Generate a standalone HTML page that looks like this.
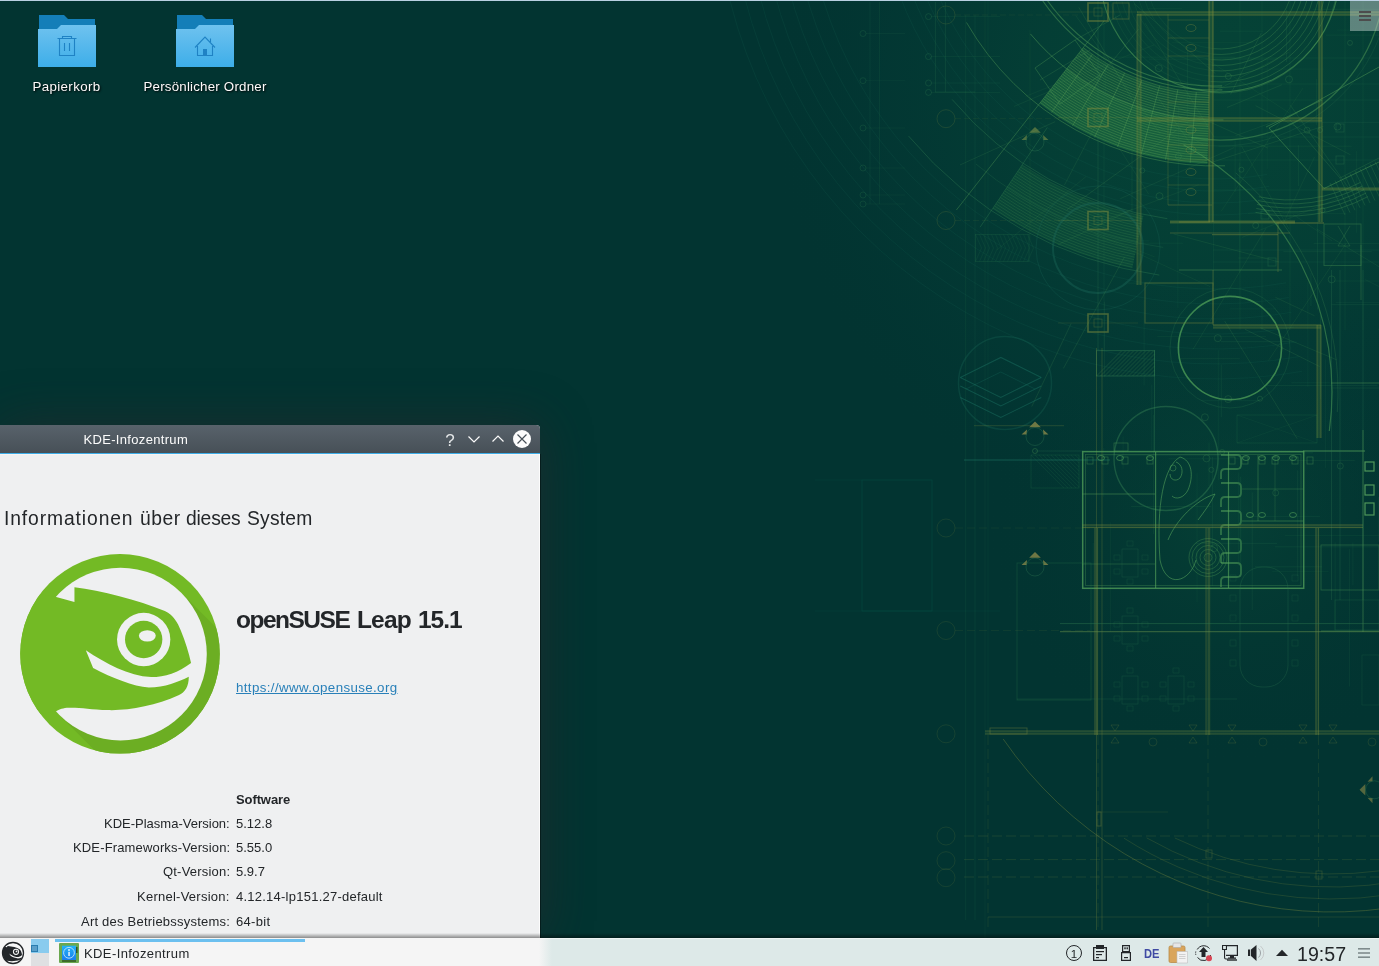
<!DOCTYPE html>
<html lang="de">
<head>
<meta charset="utf-8">
<title>KDE-Infozentrum</title>
<style>
html,body{margin:0;padding:0;}
body{width:1379px;height:966px;overflow:hidden;position:relative;background:#023431;font-family:"Liberation Sans",sans-serif;color:#232629;}
#root{position:absolute;left:0;top:0;width:1379px;height:966px;}
.dlabel,#ttitle,#h1 span,#osname span,#link,.row span,#tasklabel,#clock,svg.ga{will-change:transform;}
#wall{position:absolute;left:0;top:0;width:1379px;height:966px;}
#topline{position:absolute;left:0;top:0;width:1379px;height:1px;background:#b9d0e2;}
#toolbox{position:absolute;left:1350px;top:1px;width:29px;height:30px;background:rgba(255,255,255,0.36);}
#toolbox i{position:absolute;left:9px;width:12px;height:2px;background:#4d4d4d;}
.dicon{position:absolute;top:9px;width:64px;height:64px;}
.dlabel{position:absolute;top:77px;height:20px;line-height:20px;font-size:13.33px;color:#fcfcfc;text-align:center;white-space:nowrap;text-shadow:1px 1px 2px rgba(0,0,0,0.9),0 0 1px rgba(0,0,0,0.6);}
/* window */
#win{position:absolute;left:0;top:425px;width:540px;height:513px;background:#eff0f1;box-shadow:0 0 52px 0 rgba(62,34,44,0.46);border-top-right-radius:4px;}
#tbar{position:absolute;left:0;top:0;width:540px;height:28px;background:linear-gradient(#58626b,#475057);border-top-right-radius:4px;}
#tline{position:absolute;left:0;top:28px;width:540px;height:1px;background:#3daee9;}
#ttitle{position:absolute;left:0;top:1px;width:271.500px;text-align:center;line-height:28px;font-size:13px;letter-spacing:0.33px;color:#fcfcfc;white-space:nowrap;}
#h1{position:absolute;left:4px;top:81px;width:400px;height:26px;font-size:19.3px;line-height:26px;white-space:nowrap;}
#h1 span,#osname span{position:absolute;top:0;}
#osname{position:absolute;left:236.500px;top:179px;width:260px;height:32px;font-size:24.500px;font-weight:bold;line-height:32px;white-space:nowrap;}
#link{position:absolute;left:236px;top:253px;font-size:13.33px;line-height:20px;color:#2980b9;text-decoration:underline;white-space:nowrap;letter-spacing:0.37px;}
.row{position:absolute;left:0;width:540px;height:20px;line-height:20px;font-size:13px;white-space:nowrap;}
.row .l{position:absolute;right:310px;top:0;}
.row .v{position:absolute;left:236px;top:0;}
/* panel */
#panel{position:absolute;left:0;top:938px;width:1379px;height:28px;background:linear-gradient(to right,#f5f5f5 0,#f5f5f5 539px,#dde9e8 552px);}
#pshadow{position:absolute;left:0;top:933px;width:1379px;height:5px;background:linear-gradient(rgba(0,0,0,0),rgba(0,0,0,0.42));}
#task{position:absolute;left:55px;top:1px;width:250px;height:3px;background:#6cc0ef;}
#tasklabel{position:absolute;left:84px;top:5px;line-height:22px;font-size:13px;letter-spacing:0.4px;white-space:nowrap;}
#clock{position:absolute;left:1297px;top:3px;font-size:19.6px;line-height:26px;white-space:nowrap;color:#232629;}
</style>
</head>
<body>
<div id="root">
<svg id="wall" viewBox="0 0 1379 966">
<defs>
<radialGradient id="glow" cx="1225" cy="90" r="460" gradientUnits="userSpaceOnUse">
<stop offset="0" stop-color="#0a5a3e" stop-opacity="0.42"/>
<stop offset="0.4" stop-color="#08503c" stop-opacity="0.36"/>
<stop offset="0.75" stop-color="#04423a" stop-opacity="0.2"/>
<stop offset="1" stop-color="#023431" stop-opacity="0"/>
</radialGradient>
<radialGradient id="glow2" cx="1230" cy="520" r="250" gradientUnits="userSpaceOnUse">
<stop offset="0" stop-color="#0a4e3a" stop-opacity="0.45"/>
<stop offset="1" stop-color="#023431" stop-opacity="0"/>
</radialGradient>
</defs>
<rect width="1379" height="966" fill="#023431"/>
<rect width="1379" height="966" fill="url(#glow)"/>
<rect width="1379" height="966" fill="url(#glow2)"/>
<g fill="none" stroke-linecap="butt">
<path d="M1293.7 -31.4A74 74 0 0 1 1213.6 48.7" stroke="#5aa85a" stroke-width="0.8" opacity="0.34"/>
<path d="M1213.6 48.7A74 74 0 0 1 1146.3 -18.6" stroke="#2f7a50" stroke-width="0.7" opacity="0.22"/>
<path d="M1299.2 -31.9A79.5 79.5 0 0 1 1213.1 54.2" stroke="#5aa85a" stroke-width="0.8" opacity="0.34"/>
<path d="M1213.1 54.2A79.5 79.5 0 0 1 1140.8 -18.1" stroke="#2f7a50" stroke-width="0.7" opacity="0.22"/>
<path d="M1304.7 -32.4A85 85 0 0 1 1212.6 59.7" stroke="#5aa85a" stroke-width="0.8" opacity="0.34"/>
<path d="M1212.6 59.7A85 85 0 0 1 1135.3 -17.6" stroke="#2f7a50" stroke-width="0.7" opacity="0.22"/>
<path d="M1310.2 -32.9A90.5 90.5 0 0 1 1212.1 65.2" stroke="#5aa85a" stroke-width="0.8" opacity="0.34"/>
<path d="M1212.1 65.2A90.5 90.5 0 0 1 1129.8 -17.1" stroke="#2f7a50" stroke-width="0.7" opacity="0.22"/>
<path d="M1315.6 -33.4A96 96 0 0 1 1211.6 70.6" stroke="#5aa85a" stroke-width="0.8" opacity="0.34"/>
<path d="M1211.6 70.6A96 96 0 0 1 1124.4 -16.6" stroke="#2f7a50" stroke-width="0.7" opacity="0.22"/>
<path d="M1321.1 -33.8A101.5 101.5 0 0 1 1211.2 76.1" stroke="#5aa85a" stroke-width="0.8" opacity="0.34"/>
<path d="M1211.2 76.1A101.5 101.5 0 0 1 1118.9 -16.2" stroke="#2f7a50" stroke-width="0.7" opacity="0.22"/>
<path d="M1326.6 -34.3A107 107 0 0 1 1210.7 81.6" stroke="#5aa85a" stroke-width="0.8" opacity="0.34"/>
<path d="M1210.7 81.6A107 107 0 0 1 1113.4 -15.7" stroke="#2f7a50" stroke-width="0.7" opacity="0.22"/>
<path d="M1332.1 -34.8A112.5 112.5 0 0 1 1210.2 87.1" stroke="#5aa85a" stroke-width="0.8" opacity="0.34"/>
<path d="M1210.2 87.1A112.5 112.5 0 0 1 1107.9 -15.2" stroke="#2f7a50" stroke-width="0.7" opacity="0.22"/>
<path d="M1337.6 -35.3A118 118 0 0 1 1209.7 92.6" stroke="#5aa85a" stroke-width="0.8" opacity="0.34"/>
<path d="M1209.7 92.6A118 118 0 0 1 1102.4 -14.7" stroke="#2f7a50" stroke-width="0.7" opacity="0.22"/>
<path d="M1339.5 -35.5A120 120 0 0 1 1100.5 -14.5" stroke="#5aa85a" stroke-width="1.1" opacity="0.5"/>
<path d="M1382.5 -53.7A165 165 0 0 1 1191.3 137.5" stroke="#4f9a55" stroke-width="1.3" opacity="0.5"/>
<path d="M1388.4 -54.7A171 171 0 0 1 1190.3 143.4" stroke="#2f7a50" stroke-width="0.7" opacity="0.3"/>
<path d="M1209.4 92.9L1202.6 92.6L1195.8 92.1L1189 91.4L1182.3 90.5L1175.5 89.3L1168.9 88L1162.2 86.4L1155.7 84.6L1149.1 82.6L1142.7 80.4L1136.3 78L1130 75.4L1123.8 72.6L1117.7 69.6L1111.7 66.4L1105.7 63L1099.9 59.4L1094.3 55.7L1088.7 51.7L1083.2 47.6L1066.6 68.9L1072.7 73.5L1079 78L1085.4 82.2L1092 86.2L1098.6 90L1105.4 93.6L1112.3 97L1119.3 100.2L1126.4 103.1L1133.6 105.8L1140.8 108.3L1148.2 110.5L1155.6 112.6L1163 114.3L1170.6 115.9L1178.1 117.2L1185.7 118.2L1193.4 119L1201 119.6L1208.7 119.9Z" fill="#3c9a4a" opacity="0.2" stroke="none"/>
<path d="M1208.7 119.9L1201 119.6L1193.4 119L1185.7 118.2L1178.1 117.2L1170.6 115.9L1163 114.3L1155.6 112.6L1148.2 110.5L1140.8 108.3L1133.6 105.8L1126.4 103.1L1119.3 100.2L1112.3 97L1105.4 93.6L1098.6 90L1092 86.2L1085.4 82.2L1079 78L1072.7 73.5L1066.6 68.9L1039.5 103.6L1046.8 109.1L1054.2 114.3L1061.8 119.3L1069.5 124.1L1077.4 128.6L1085.4 132.8L1093.5 136.8L1101.8 140.6L1110.2 144L1118.7 147.2L1127.3 150.2L1136 152.8L1144.7 155.2L1153.6 157.3L1162.5 159.1L1171.4 160.6L1180.4 161.9L1189.4 162.8L1198.5 163.5L1207.5 163.9Z" fill="#3c9a4a" opacity="0.32" stroke="none"/>
<path d="M1209.4 92.9A214 214 0 0 1 1083.2 47.6" stroke="#6fb35a" stroke-width="0.8" opacity="0.36"/>
<path d="M1209.3 95.3A216.4 216.4 0 0 1 1081.8 49.5" stroke="#6fb35a" stroke-width="0.8" opacity="0.36"/>
<path d="M1209.3 97.7A218.8 218.8 0 0 1 1080.3 51.4" stroke="#6fb35a" stroke-width="0.8" opacity="0.36"/>
<path d="M1209.2 100.1A221.2 221.2 0 0 1 1078.8 53.3" stroke="#6fb35a" stroke-width="0.8" opacity="0.36"/>
<path d="M1209.1 102.5A223.6 223.6 0 0 1 1077.3 55.2" stroke="#6fb35a" stroke-width="0.8" opacity="0.36"/>
<path d="M1209.1 104.9A226 226 0 0 1 1075.9 57.1" stroke="#6fb35a" stroke-width="0.8" opacity="0.36"/>
<path d="M1209 107.3A228.4 228.4 0 0 1 1074.4 59" stroke="#6fb35a" stroke-width="0.8" opacity="0.36"/>
<path d="M1209 109.7A230.8 230.8 0 0 1 1072.9 60.9" stroke="#6fb35a" stroke-width="0.8" opacity="0.36"/>
<path d="M1208.9 112.1A233.2 233.2 0 0 1 1071.4 62.8" stroke="#6fb35a" stroke-width="0.8" opacity="0.36"/>
<path d="M1208.8 114.5A235.6 235.6 0 0 1 1070 64.7" stroke="#6fb35a" stroke-width="0.8" opacity="0.36"/>
<path d="M1208.8 116.9A238 238 0 0 1 1068.5 66.5" stroke="#6fb35a" stroke-width="0.8" opacity="0.36"/>
<path d="M1208.7 119.3A240.4 240.4 0 0 1 1067 68.4" stroke="#6fb35a" stroke-width="0.8" opacity="0.36"/>
<path d="M1208.6 121.7A242.8 242.8 0 0 1 1065.5 70.3" stroke="#6fb35a" stroke-width="0.8" opacity="0.36"/>
<path d="M1208.6 124.1A245.2 245.2 0 0 1 1064 72.2" stroke="#6fb35a" stroke-width="0.8" opacity="0.36"/>
<path d="M1208.5 126.5A247.6 247.6 0 0 1 1062.6 74.1" stroke="#6fb35a" stroke-width="0.8" opacity="0.36"/>
<path d="M1208.5 128.9A250 250 0 0 1 1061.1 76" stroke="#6fb35a" stroke-width="0.8" opacity="0.36"/>
<path d="M1208.4 131.3A252.4 252.4 0 0 1 1059.6 77.9" stroke="#6fb35a" stroke-width="0.8" opacity="0.36"/>
<path d="M1208.3 133.7A254.8 254.8 0 0 1 1058.1 79.8" stroke="#6fb35a" stroke-width="0.8" opacity="0.36"/>
<path d="M1208.3 136.1A257.2 257.2 0 0 1 1056.7 81.7" stroke="#6fb35a" stroke-width="0.8" opacity="0.36"/>
<path d="M1208.2 138.5A259.6 259.6 0 0 1 1055.2 83.6" stroke="#6fb35a" stroke-width="0.8" opacity="0.36"/>
<path d="M1208.1 140.9A262 262 0 0 1 1053.7 85.5" stroke="#6fb35a" stroke-width="0.8" opacity="0.36"/>
<path d="M1208.1 143.3A264.4 264.4 0 0 1 1052.2 87.4" stroke="#6fb35a" stroke-width="0.8" opacity="0.36"/>
<path d="M1208 145.7A266.8 266.8 0 0 1 1050.7 89.2" stroke="#6fb35a" stroke-width="0.8" opacity="0.36"/>
<path d="M1208 148.1A269.2 269.2 0 0 1 1049.3 91.1" stroke="#6fb35a" stroke-width="0.8" opacity="0.36"/>
<path d="M1207.9 150.5A271.6 271.6 0 0 1 1047.8 93" stroke="#6fb35a" stroke-width="0.8" opacity="0.36"/>
<path d="M1207.8 152.9A274 274 0 0 1 1046.3 94.9" stroke="#6fb35a" stroke-width="0.8" opacity="0.36"/>
<path d="M1207.8 155.3A276.4 276.4 0 0 1 1044.8 96.8" stroke="#6fb35a" stroke-width="0.8" opacity="0.36"/>
<path d="M1207.7 157.7A278.8 278.8 0 0 1 1043.4 98.7" stroke="#6fb35a" stroke-width="0.8" opacity="0.36"/>
<path d="M1207.6 160.1A281.2 281.2 0 0 1 1041.9 100.6" stroke="#6fb35a" stroke-width="0.8" opacity="0.36"/>
<path d="M1207.6 162.5A283.6 283.6 0 0 1 1040.4 102.5" stroke="#6fb35a" stroke-width="0.8" opacity="0.36"/>
<path d="M1222.2 85.9A207 207 0 0 1 1035.7 -17.5" stroke="#4f9a55" stroke-width="1.1" opacity="0.5"/>
<path d="M1222.4 89.9A211 211 0 0 1 1032.3 -15.5" stroke="#4f9a55" stroke-width="1.1" opacity="0.5"/>
<path d="M1223.4 119.9A241 241 0 0 1 1030.4 33.9" stroke="#4f9a55" stroke-width="1" opacity="0.5"/>
<path d="M1225 165.8A287 287 0 0 1 966.5 22.5" stroke="#4f9a55" stroke-width="1" opacity="0.45"/>
<path d="M1196.3 92.2L1190.2 162.9" stroke="#6fb35a" stroke-width="0.8" opacity="0.35"/>
<path d="M1177.8 89.7L1165.5 159.7" stroke="#6fb35a" stroke-width="0.8" opacity="0.35"/>
<path d="M1159.6 85.7L1141.2 154.3" stroke="#6fb35a" stroke-width="0.8" opacity="0.35"/>
<path d="M1141.8 80.1L1117.5 146.8" stroke="#6fb35a" stroke-width="0.8" opacity="0.35"/>
<path d="M1124.6 72.9L1094.6 137.3" stroke="#6fb35a" stroke-width="0.8" opacity="0.35"/>
<path d="M1108 64.3L1072.5 125.8" stroke="#6fb35a" stroke-width="0.8" opacity="0.35"/>
<path d="M1092.3 54.3L1051.5 112.5" stroke="#6fb35a" stroke-width="0.8" opacity="0.35"/>
<path d="M1104.2 20.8L956.4 210" stroke="#4f9a55" stroke-width="1" opacity="0.4"/>
<path d="M1267.1 174.4A300 300 0 0 1 915.2 -110.5" stroke="#1c6a5a" stroke-width="0.8" opacity="0.2"/>
<path d="M1269.2 186.3A312 312 0 0 1 903.2 -110.1" stroke="#1c6a5a" stroke-width="0.8" opacity="0.2"/>
<path d="M1271.3 198.1A324 324 0 0 1 891.2 -109.7" stroke="#1c6a5a" stroke-width="0.8" opacity="0.2"/>
<path d="M1273.3 209.9A336 336 0 0 1 879.2 -109.3" stroke="#1c6a5a" stroke-width="0.8" opacity="0.2"/>
<path d="M1286.2 282.8A410 410 0 0 1 805.2 -106.7" stroke="#1c6a5a" stroke-width="0.8" opacity="0.2"/>
<path d="M1288.8 297.5A425 425 0 0 1 790.3 -106.2" stroke="#1c6a5a" stroke-width="0.8" opacity="0.2"/>
<path d="M1291.4 312.3A440 440 0 0 1 775.3 -105.6" stroke="#1c6a5a" stroke-width="0.8" opacity="0.2"/>
<path d="M1294 327.1A455 455 0 0 1 760.3 -105.1" stroke="#1c6a5a" stroke-width="0.8" opacity="0.2"/>
<path d="M1296.6 341.9A470 470 0 0 1 745.3 -104.6" stroke="#1c6a5a" stroke-width="0.8" opacity="0.2"/>
<path d="M1299.2 356.6A485 485 0 0 1 730.3 -104.1" stroke="#1c6a5a" stroke-width="0.8" opacity="0.2"/>
<path d="M1301.8 371.4A500 500 0 0 1 715.3 -103.6" stroke="#1c6a5a" stroke-width="0.8" opacity="0.2"/>
<path d="M1143.3 216.5L1136.8 215L1130.4 213.5L1124 211.8L1117.6 210L1111.3 208L1105 206L1098.7 203.8L1092.5 201.5L1086.3 199.1L1080.2 196.6L1074.1 193.9L1068.1 191.2L1062.1 188.3L1056.2 185.3L1050.4 182.2L1044.6 179L1038.9 175.6L1033.2 172.2L1027.6 168.7L1022.1 165L992.4 209L998.8 213.2L1005.3 217.3L1011.8 221.2L1018.4 225.1L1025.1 228.8L1031.8 232.4L1038.7 235.8L1045.5 239.1L1052.5 242.3L1059.5 245.4L1066.6 248.3L1073.7 251.1L1080.8 253.7L1088.1 256.2L1095.3 258.6L1102.6 260.8L1110 262.9L1117.4 264.8L1124.8 266.6L1132.3 268.3Z" fill="#2f8a4a" opacity="0.15" stroke="none"/>
<path d="M1143.3 216.5A345 345 0 0 1 1022.1 165" stroke="#4f9a55" stroke-width="0.8" opacity="0.25"/>
<path d="M1142.7 219A347.6 347.6 0 0 1 1020.6 167.2" stroke="#4f9a55" stroke-width="0.8" opacity="0.25"/>
<path d="M1142.2 221.5A350.2 350.2 0 0 1 1019.2 169.3" stroke="#4f9a55" stroke-width="0.8" opacity="0.25"/>
<path d="M1141.6 224.1A352.8 352.8 0 0 1 1017.7 171.5" stroke="#4f9a55" stroke-width="0.8" opacity="0.25"/>
<path d="M1141.1 226.6A355.4 355.4 0 0 1 1016.3 173.6" stroke="#4f9a55" stroke-width="0.8" opacity="0.25"/>
<path d="M1140.6 229.2A358 358 0 0 1 1014.8 175.8" stroke="#4f9a55" stroke-width="0.8" opacity="0.25"/>
<path d="M1140 231.7A360.6 360.6 0 0 1 1013.4 178" stroke="#4f9a55" stroke-width="0.8" opacity="0.25"/>
<path d="M1139.5 234.3A363.2 363.2 0 0 1 1011.9 180.1" stroke="#4f9a55" stroke-width="0.8" opacity="0.25"/>
<path d="M1138.9 236.8A365.8 365.8 0 0 1 1010.4 182.3" stroke="#4f9a55" stroke-width="0.8" opacity="0.25"/>
<path d="M1138.4 239.3A368.4 368.4 0 0 1 1009 184.4" stroke="#4f9a55" stroke-width="0.8" opacity="0.25"/>
<path d="M1137.9 241.9A371 371 0 0 1 1007.5 186.6" stroke="#4f9a55" stroke-width="0.8" opacity="0.25"/>
<path d="M1137.3 244.4A373.6 373.6 0 0 1 1006.1 188.7" stroke="#4f9a55" stroke-width="0.8" opacity="0.25"/>
<path d="M1136.8 247A376.2 376.2 0 0 1 1004.6 190.9" stroke="#4f9a55" stroke-width="0.8" opacity="0.25"/>
<path d="M1136.2 249.5A378.8 378.8 0 0 1 1003.2 193" stroke="#4f9a55" stroke-width="0.8" opacity="0.25"/>
<path d="M1135.7 252.1A381.4 381.4 0 0 1 1001.7 195.2" stroke="#4f9a55" stroke-width="0.8" opacity="0.25"/>
<path d="M1135.2 254.6A384 384 0 0 1 1000.3 197.4" stroke="#4f9a55" stroke-width="0.8" opacity="0.25"/>
<path d="M1134.6 257.2A386.6 386.6 0 0 1 998.8 199.5" stroke="#4f9a55" stroke-width="0.8" opacity="0.25"/>
<path d="M1134.1 259.7A389.2 389.2 0 0 1 997.4 201.7" stroke="#4f9a55" stroke-width="0.8" opacity="0.25"/>
<path d="M1133.5 262.2A391.8 391.8 0 0 1 995.9 203.8" stroke="#4f9a55" stroke-width="0.8" opacity="0.25"/>
<path d="M1133 264.8A394.4 394.4 0 0 1 994.5 206" stroke="#4f9a55" stroke-width="0.8" opacity="0.25"/>
<path d="M1132.5 267.3A397 397 0 0 1 993 208.1" stroke="#4f9a55" stroke-width="0.8" opacity="0.25"/>
<path d="M1167.3 218.7A343 343 0 0 1 952.2 99.5" stroke="#2f7a50" stroke-width="1" opacity="0.4"/>
<path d="M1159.3 275.1A400 400 0 0 1 908.6 136.1" stroke="#2f7a50" stroke-width="1" opacity="0.4"/>
<path d="M1163.2 247.4A372 372 0 0 1 975.9 164" stroke="#2f7a50" stroke-width="0.8" opacity="0.3"/>
<path d="M1047.2 127.7L980.1 227.2" stroke="#2f7a50" stroke-width="1" opacity="0.4"/>
<rect x="975.5" y="234.5" width="53.5" height="27" stroke="#2f7a50" stroke-width="0.7" opacity="0.3" fill="none"/>
<path d="M975.5 234.5L981.5 248L975.5 261.5" stroke="#2f7a50" stroke-width="0.5" opacity="0.3" fill="none"/>
<path d="M979.5 234.5L985.5 248L979.5 261.5" stroke="#2f7a50" stroke-width="0.5" opacity="0.3" fill="none"/>
<path d="M983.5 234.5L989.5 248L983.5 261.5" stroke="#2f7a50" stroke-width="0.5" opacity="0.3" fill="none"/>
<path d="M987.5 234.5L993.5 248L987.5 261.5" stroke="#2f7a50" stroke-width="0.5" opacity="0.3" fill="none"/>
<path d="M991.5 234.5L997.5 248L991.5 261.5" stroke="#2f7a50" stroke-width="0.5" opacity="0.3" fill="none"/>
<path d="M995.5 234.5L1001.5 248L995.5 261.5" stroke="#2f7a50" stroke-width="0.5" opacity="0.3" fill="none"/>
<path d="M999.5 234.5L1005.5 248L999.5 261.5" stroke="#2f7a50" stroke-width="0.5" opacity="0.3" fill="none"/>
<path d="M1003.5 234.5L1009.5 248L1003.5 261.5" stroke="#2f7a50" stroke-width="0.5" opacity="0.3" fill="none"/>
<path d="M1007.5 234.5L1013.5 248L1007.5 261.5" stroke="#2f7a50" stroke-width="0.5" opacity="0.3" fill="none"/>
<path d="M1011.5 234.5L1017.5 248L1011.5 261.5" stroke="#2f7a50" stroke-width="0.5" opacity="0.3" fill="none"/>
<path d="M1015.5 234.5L1021.5 248L1015.5 261.5" stroke="#2f7a50" stroke-width="0.5" opacity="0.3" fill="none"/>
<path d="M1019.5 234.5L1025.5 248L1019.5 261.5" stroke="#2f7a50" stroke-width="0.5" opacity="0.3" fill="none"/>
<path d="M1023.5 234.5L1029.5 248L1023.5 261.5" stroke="#2f7a50" stroke-width="0.5" opacity="0.3" fill="none"/>
<path d="M1027.5 234.5L1033.5 248L1027.5 261.5" stroke="#2f7a50" stroke-width="0.5" opacity="0.3" fill="none"/>
<path d="M1183.5 144.8A280 280 0 0 1 1329.3 431" stroke="#4f9a55" stroke-width="1.2" opacity="0.55"/>
<path d="M1235.8 172.9A286 286 0 0 1 1337.3 412" stroke="#4f9a55" stroke-width="0.7" opacity="0.3"/>
<path d="M1269 128L1379 67" stroke="#4f9a55" stroke-width="1" opacity="0.5" fill="none"/>
<path d="M1269 128L1324 188.5L1379 162" stroke="#4f9a55" stroke-width="1" opacity="0.5" fill="none"/>
<path d="M1290 120L1340 178L1379 158" stroke="#4f9a55" stroke-width="0.7" opacity="0.3" fill="none"/>
<path d="M1035 68L1075 40L1100 75L1060 104L1035 68" stroke="#4f9a55" stroke-width="0.9" opacity="0.4" fill="none"/>
<path d="M1040 80L1090 50" stroke="#4f9a55" stroke-width="0.7" opacity="0.3" fill="none"/>
<path d="M1075 40L1120 15" stroke="#4f9a55" stroke-width="0.7" opacity="0.3" fill="none"/>
<circle cx="1098" cy="248" r="45" stroke="#1c6a5a" stroke-width="2" opacity="0.4" fill="none"/>
<circle cx="1098" cy="248" r="62" stroke="#1c6a5a" stroke-width="1" opacity="0.25" fill="none"/>
<circle cx="1005" cy="383" r="46.5" stroke="#1c6a5a" stroke-width="1.5" opacity="0.3" fill="none"/>
<circle cx="1230" cy="348" r="51.6" stroke="#4fa058" stroke-width="1.6" opacity="0.75" fill="none"/>
<circle cx="1230" cy="348" r="60" stroke="#2f7a50" stroke-width="0.7" opacity="0.35" fill="none"/>
<circle cx="1166" cy="458.5" r="52" stroke="#2f7a50" stroke-width="1.4" opacity="0.5" fill="none"/>
<circle cx="1208" cy="557.5" r="4" stroke="#4f9a55" stroke-width="0.8" opacity="0.45" fill="none"/>
<circle cx="1208" cy="557.5" r="8" stroke="#4f9a55" stroke-width="0.8" opacity="0.45" fill="none"/>
<circle cx="1208" cy="557.5" r="12" stroke="#4f9a55" stroke-width="0.8" opacity="0.45" fill="none"/>
<circle cx="1208" cy="557.5" r="16" stroke="#4f9a55" stroke-width="0.8" opacity="0.45" fill="none"/>
<circle cx="1208" cy="557.5" r="19" stroke="#4f9a55" stroke-width="0.8" opacity="0.45" fill="none"/>
<path d="M1160 560C1156 505 1164 466 1180 457C1192 460 1194 476 1188 490C1184 498 1176 500 1172 496M1176 462c6 2 8 10 4 16c-4 4 -10 2 -10 -4M1160 560C1166 590 1190 582 1196 560M1168 540C1176 520 1196 500 1215 494C1210 504 1204 512 1198 520" stroke="#58a85c" stroke-width="1" opacity="0.55"/>
<circle cx="1173" cy="468" r="3" stroke="#58a85c" stroke-width="0.8" opacity="0.5" fill="none"/>
<path d="M1221 455h16q4 0 4 4v6q0 4 -4 4h-12q-4 0 -4 4v6" stroke="#58a85c" stroke-width="1.800" opacity="0.5" stroke-linejoin="round"/>
<path d="M1221 483h16q4 0 4 4v6q0 4 -4 4h-12q-4 0 -4 4v6" stroke="#58a85c" stroke-width="1.800" opacity="0.5" stroke-linejoin="round"/>
<path d="M1221 511h16q4 0 4 4v6q0 4 -4 4h-12q-4 0 -4 4v6" stroke="#58a85c" stroke-width="1.800" opacity="0.5" stroke-linejoin="round"/>
<path d="M1221 539h16q4 0 4 4v6q0 4 -4 4h-12q-4 0 -4 4v6" stroke="#58a85c" stroke-width="1.800" opacity="0.5" stroke-linejoin="round"/>
<path d="M1221 563h16q4 0 4 4v6q0 4 -4 4h-12q-4 0 -4 4v6" stroke="#58a85c" stroke-width="1.800" opacity="0.5" stroke-linejoin="round"/>
<path d="M1139 14L1139 285" stroke="#6f8f3c" stroke-width="4" opacity="0.22"/>
<path d="M1211 0L1211 222" stroke="#6f8f3c" stroke-width="4" opacity="0.22"/>
<path d="M1320.5 0L1320.5 222" stroke="#6f8f3c" stroke-width="4" opacity="0.22"/>
<path d="M1137 13.5L1379 13.5" stroke="#6f8f3c" stroke-width="4" opacity="0.22"/>
<path d="M1137 119.5L1322 119.5" stroke="#6f8f3c" stroke-width="4" opacity="0.22"/>
<path d="M1170 222L1295 222" stroke="#6f8f3c" stroke-width="4" opacity="0.22"/>
<path d="M1319 325L1319 438" stroke="#6f8f3c" stroke-width="4" opacity="0.22"/>
<path d="M1213 326.5L1321 326.5" stroke="#6f8f3c" stroke-width="4" opacity="0.22"/>
<path d="M1208.5 528L1208.5 735" stroke="#6f8f3c" stroke-width="4" opacity="0.15"/>
<path d="M1096.2 528L1096.2 735" stroke="#6f8f3c" stroke-width="4" opacity="0.15"/>
<path d="M1317.2 528L1317.2 735" stroke="#6f8f3c" stroke-width="4" opacity="0.15"/>
<path d="M1082 526.2L1363 526.2" stroke="#6f8f3c" stroke-width="4" opacity="0.15"/>
<path d="M985 732.5L1379 732.5" stroke="#6f8f3c" stroke-width="4" opacity="0.15"/>
<path d="M1322 189L1379 189" stroke="#6f8f3c" stroke-width="4" opacity="0.22"/>
<path d="M1137 14L1137 285" stroke="#7d8a3c" stroke-width="1" opacity="0.4"/>
<path d="M1141 14L1141 285" stroke="#7d8a3c" stroke-width="1" opacity="0.4"/>
<path d="M1209 0L1209 222" stroke="#7d8a3c" stroke-width="1.2" opacity="0.55"/>
<path d="M1213 0L1213 222" stroke="#7d8a3c" stroke-width="1.2" opacity="0.55"/>
<path d="M1319 0L1319 222" stroke="#7d8a3c" stroke-width="1" opacity="0.45"/>
<path d="M1322 0L1322 222" stroke="#7d8a3c" stroke-width="1" opacity="0.45"/>
<path d="M1137 12L1379 12" stroke="#7d8a3c" stroke-width="1" opacity="0.45"/>
<path d="M1137 15L1379 15" stroke="#7d8a3c" stroke-width="1" opacity="0.45"/>
<path d="M1137 118L1322 118" stroke="#7d8a3c" stroke-width="1" opacity="0.45"/>
<path d="M1137 121L1322 121" stroke="#7d8a3c" stroke-width="1" opacity="0.45"/>
<path d="M1170 222L1295 222" stroke="#7d8a3c" stroke-width="1.5" opacity="0.45"/>
<path d="M1170 233L1290 233" stroke="#7d8a3c" stroke-width="1" opacity="0.4"/>
<path d="M1168 205L1212 205" stroke="#7d8a3c" stroke-width="1" opacity="0.4"/>
<path d="M1098 0L1098 350" stroke="#2f7a50" stroke-width="0.8" opacity="0.35"/>
<path d="M1104 0L1104 350" stroke="#2f7a50" stroke-width="0.6" opacity="0.25"/>
<path d="M1030 30L1030 240" stroke="#2f7a50" stroke-width="0.6" opacity="0.2"/>
<path d="M985 0L985 966" stroke="#2f7a50" stroke-width="0.6" opacity="0.2"/>
<path d="M1168 20L1209 20" stroke="#7d8a3c" stroke-width="0.8" opacity="0.35"/>
<path d="M1168 38L1209 38" stroke="#7d8a3c" stroke-width="0.8" opacity="0.35"/>
<path d="M1168 56L1209 56" stroke="#7d8a3c" stroke-width="0.8" opacity="0.35"/>
<path d="M1168 102L1209 102" stroke="#7d8a3c" stroke-width="0.8" opacity="0.35"/>
<path d="M1168 125L1209 125" stroke="#7d8a3c" stroke-width="0.8" opacity="0.35"/>
<path d="M1168 145L1209 145" stroke="#7d8a3c" stroke-width="0.8" opacity="0.35"/>
<path d="M1168 160L1209 160" stroke="#7d8a3c" stroke-width="0.8" opacity="0.35"/>
<path d="M1168 185L1209 185" stroke="#7d8a3c" stroke-width="0.8" opacity="0.35"/>
<path d="M1168 14L1168 205" stroke="#7d8a3c" stroke-width="0.8" opacity="0.35"/>
<ellipse cx="1191" cy="28" rx="5" ry="3.5" stroke="#7d8a3c" stroke-width="0.8" opacity="0.45"/>
<ellipse cx="1191" cy="48" rx="5" ry="3.5" stroke="#7d8a3c" stroke-width="0.8" opacity="0.45"/>
<ellipse cx="1191" cy="130" rx="5" ry="3.5" stroke="#7d8a3c" stroke-width="0.8" opacity="0.45"/>
<ellipse cx="1191" cy="150" rx="5" ry="3.5" stroke="#7d8a3c" stroke-width="0.8" opacity="0.45"/>
<ellipse cx="1191" cy="172" rx="5" ry="3.5" stroke="#7d8a3c" stroke-width="0.8" opacity="0.45"/>
<ellipse cx="1191" cy="192" rx="5" ry="3.5" stroke="#7d8a3c" stroke-width="0.8" opacity="0.45"/>
<path d="M1213 58L1379 58" stroke="#2f7a50" stroke-width="0.6" opacity="0.25"/>
<path d="M1213 84L1379 84" stroke="#2f7a50" stroke-width="0.6" opacity="0.25"/>
<path d="M1213 100L1379 100" stroke="#2f7a50" stroke-width="0.6" opacity="0.25"/>
<path d="M1213 137L1379 137" stroke="#2f7a50" stroke-width="0.6" opacity="0.25"/>
<path d="M1213 160L1379 160" stroke="#2f7a50" stroke-width="0.6" opacity="0.25"/>
<path d="M1213 190L1379 190" stroke="#2f7a50" stroke-width="0.6" opacity="0.25"/>
<path d="M1213 250L1379 250" stroke="#2f7a50" stroke-width="0.6" opacity="0.25"/>
<path d="M1213 262L1379 262" stroke="#2f7a50" stroke-width="0.6" opacity="0.25"/>
<path d="M1240 0L1240 330" stroke="#2f7a50" stroke-width="0.6" opacity="0.22"/>
<path d="M1262 0L1262 330" stroke="#2f7a50" stroke-width="0.6" opacity="0.22"/>
<path d="M1290 0L1290 330" stroke="#2f7a50" stroke-width="0.6" opacity="0.22"/>
<path d="M1345 0L1345 330" stroke="#2f7a50" stroke-width="0.6" opacity="0.22"/>
<path d="M1363 0L1363 330" stroke="#2f7a50" stroke-width="0.6" opacity="0.22"/>
<rect x="1088" y="3" width="20" height="18" stroke="#7d8a3c" stroke-width="1.6" opacity="0.55" fill="none"/>
<rect x="1094" y="8" width="8" height="8" stroke="#7d8a3c" stroke-width="0.7" opacity="0.4" fill="none"/>
<path d="M1058 12L1138 12" stroke="#7d8a3c" stroke-width="0.6" opacity="0.3"/>
<rect x="1088" y="108.5" width="20" height="18" stroke="#7d8a3c" stroke-width="1.6" opacity="0.55" fill="none"/>
<rect x="1094" y="113.5" width="8" height="8" stroke="#7d8a3c" stroke-width="0.7" opacity="0.4" fill="none"/>
<path d="M1058 117.5L1138 117.5" stroke="#7d8a3c" stroke-width="0.6" opacity="0.3"/>
<rect x="1088" y="211.5" width="20" height="18" stroke="#7d8a3c" stroke-width="1.6" opacity="0.55" fill="none"/>
<rect x="1094" y="216.5" width="8" height="8" stroke="#7d8a3c" stroke-width="0.7" opacity="0.4" fill="none"/>
<path d="M1058 220.5L1138 220.5" stroke="#7d8a3c" stroke-width="0.6" opacity="0.3"/>
<rect x="1088" y="314" width="20" height="18" stroke="#7d8a3c" stroke-width="1.6" opacity="0.55" fill="none"/>
<rect x="1094" y="319" width="8" height="8" stroke="#7d8a3c" stroke-width="0.7" opacity="0.4" fill="none"/>
<path d="M1058 323L1138 323" stroke="#7d8a3c" stroke-width="0.6" opacity="0.3"/>
<rect x="1113" y="3" width="16" height="16" stroke="#7d8a3c" stroke-width="1.2" opacity="0.35" fill="none"/>
<circle cx="863" cy="33.5" r="3" stroke="#2f7a50" stroke-width="0.7" opacity="0.35" fill="none"/>
<path d="M866 33.5L905 33.5" stroke="#2f7a50" stroke-width="0.6" opacity="0.2"/>
<circle cx="863" cy="80.7" r="3" stroke="#2f7a50" stroke-width="0.7" opacity="0.35" fill="none"/>
<path d="M866 80.7L905 80.7" stroke="#2f7a50" stroke-width="0.6" opacity="0.2"/>
<circle cx="863" cy="128" r="3" stroke="#2f7a50" stroke-width="0.7" opacity="0.35" fill="none"/>
<path d="M866 128L905 128" stroke="#2f7a50" stroke-width="0.6" opacity="0.2"/>
<circle cx="863" cy="168" r="3" stroke="#2f7a50" stroke-width="0.7" opacity="0.35" fill="none"/>
<path d="M866 168L905 168" stroke="#2f7a50" stroke-width="0.6" opacity="0.2"/>
<circle cx="863" cy="195" r="3" stroke="#2f7a50" stroke-width="0.7" opacity="0.35" fill="none"/>
<path d="M866 195L905 195" stroke="#2f7a50" stroke-width="0.6" opacity="0.2"/>
<circle cx="863" cy="204" r="3" stroke="#2f7a50" stroke-width="0.7" opacity="0.35" fill="none"/>
<path d="M866 204L905 204" stroke="#2f7a50" stroke-width="0.6" opacity="0.2"/>
<circle cx="928.5" cy="16.6" r="3" stroke="#2f7a50" stroke-width="0.7" opacity="0.4" fill="none"/>
<path d="M931 16.6L1000 16.6" stroke="#2f7a50" stroke-width="0.6" opacity="0.25"/>
<circle cx="928.5" cy="56.6" r="3" stroke="#2f7a50" stroke-width="0.7" opacity="0.4" fill="none"/>
<path d="M931 56.6L1000 56.6" stroke="#2f7a50" stroke-width="0.6" opacity="0.25"/>
<circle cx="928.5" cy="83" r="3" stroke="#2f7a50" stroke-width="0.7" opacity="0.4" fill="none"/>
<path d="M931 83L1000 83" stroke="#2f7a50" stroke-width="0.6" opacity="0.25"/>
<circle cx="928.5" cy="92.4" r="3" stroke="#2f7a50" stroke-width="0.7" opacity="0.4" fill="none"/>
<path d="M931 92.4L1000 92.4" stroke="#2f7a50" stroke-width="0.6" opacity="0.25"/>
<circle cx="946" cy="15" r="9" stroke="#7d8a3c" stroke-width="0.8" opacity="0.26" fill="none"/>
<path d="M955 15L1080 15" stroke="#7d8a3c" stroke-width="0.6" opacity="0.18" stroke-dasharray="6 3"/>
<circle cx="946" cy="118.7" r="9" stroke="#7d8a3c" stroke-width="0.8" opacity="0.26" fill="none"/>
<path d="M955 118.7L1080 118.7" stroke="#7d8a3c" stroke-width="0.6" opacity="0.18" stroke-dasharray="6 3"/>
<circle cx="946" cy="220.5" r="9" stroke="#7d8a3c" stroke-width="0.8" opacity="0.26" fill="none"/>
<path d="M955 220.5L1080 220.5" stroke="#7d8a3c" stroke-width="0.6" opacity="0.18" stroke-dasharray="6 3"/>
<path d="M870 2L870 204" stroke="#2f7a50" stroke-width="0.7" opacity="0.22"/>
<path d="M879.6 2L879.6 204" stroke="#2f7a50" stroke-width="0.7" opacity="0.22"/>
<path d="M935.4 2L935.4 92" stroke="#2f7a50" stroke-width="0.8" opacity="0.3"/>
<path d="M945.4 2L945.4 92" stroke="#2f7a50" stroke-width="0.8" opacity="0.3"/>
<path d="M935 92L975 92" stroke="#2f7a50" stroke-width="0.8" opacity="0.3"/>
<path d="M965.7 15L965.7 920" stroke="#2f7a50" stroke-width="0.7" opacity="0.22"/>
<path d="M975 15L975 920" stroke="#2f7a50" stroke-width="0.7" opacity="0.22"/>
<path d="M1360.4 182.4A150 150 0 0 1 1258.8 196.7" stroke="#4f9a55" stroke-width="0.8" opacity="0.4"/>
<path d="M1362.3 186A154 154 0 0 1 1258 200.6" stroke="#4f9a55" stroke-width="0.8" opacity="0.4"/>
<path d="M1364.2 189.5A158 158 0 0 1 1257.1 204.5" stroke="#4f9a55" stroke-width="0.8" opacity="0.4"/>
<path d="M1366.1 193A162 162 0 0 1 1256.3 208.5" stroke="#4f9a55" stroke-width="0.8" opacity="0.4"/>
<path d="M1367.9 196.6A166 166 0 0 1 1255.5 212.4" stroke="#4f9a55" stroke-width="0.8" opacity="0.4"/>
<path d="M1266 127L1322 100" stroke="#4f9a55" stroke-width="1" opacity="0.45"/>
<path d="M1322 189L1379 189" stroke="#7d8a3c" stroke-width="1.2" opacity="0.45"/>
<path d="M1179 222L1210 222" stroke="#7d8a3c" stroke-width="1.3" opacity="0.45"/>
<path d="M1276 223L1324 223" stroke="#7d8a3c" stroke-width="1.3" opacity="0.45"/>
<path d="M1212 234.6L1278 234.6" stroke="#7d8a3c" stroke-width="1.2" opacity="0.45"/>
<path d="M1278 222L1278 272" stroke="#7d8a3c" stroke-width="1" opacity="0.4"/>
<path d="M1179 270L1282 270" stroke="#4f9a55" stroke-width="1" opacity="0.45"/>
<rect x="1324" y="224" width="37" height="41.6" stroke="#4f9a55" stroke-width="0.9" opacity="0.4" fill="none"/>
<path d="M1361 245L1361 300" stroke="#4f9a55" stroke-width="0.9" opacity="0.4"/>
<path d="M1338 226L1350 246L1338 246L1350 226" stroke="#4f9a55" stroke-width="0.7" opacity="0.35" fill="none"/>
<rect x="1336" y="124" width="8" height="8" stroke="#2f7a50" stroke-width="0.8" opacity="0.4" fill="none"/>
<rect x="1336" y="156" width="8" height="8" stroke="#2f7a50" stroke-width="0.8" opacity="0.4" fill="none"/>
<rect x="1261" y="211" width="8" height="8" stroke="#2f7a50" stroke-width="0.8" opacity="0.4" fill="none"/>
<rect x="1268" y="258" width="8" height="8" stroke="#2f7a50" stroke-width="0.8" opacity="0.4" fill="none"/>
<path d="M1330 183L1345 215" stroke="#4f9a55" stroke-width="0.7" opacity="0.3"/>
<path d="M1335 180.6L1350 212.6" stroke="#4f9a55" stroke-width="0.7" opacity="0.3"/>
<path d="M1340 178.2L1355 210.2" stroke="#4f9a55" stroke-width="0.7" opacity="0.3"/>
<path d="M1345 175.8L1360 207.8" stroke="#4f9a55" stroke-width="0.7" opacity="0.3"/>
<path d="M1350 173.4L1365 205.4" stroke="#4f9a55" stroke-width="0.7" opacity="0.3"/>
<path d="M1355 171L1370 203" stroke="#4f9a55" stroke-width="0.7" opacity="0.3"/>
<path d="M1360 168.6L1375 200.6" stroke="#4f9a55" stroke-width="0.7" opacity="0.3"/>
<path d="M1365 166.2L1380 198.2" stroke="#4f9a55" stroke-width="0.7" opacity="0.3"/>
<path d="M1370 163.8L1385 195.8" stroke="#4f9a55" stroke-width="0.7" opacity="0.3"/>
<path d="M1375 161.4L1390 193.4" stroke="#4f9a55" stroke-width="0.7" opacity="0.3"/>
<path d="M1198.8 184.7L1073.3 231.8" stroke="#4f9a55" stroke-width="0.6" opacity="0.1784853046961058"/>
<path d="M1314.5 157L1283.3 223.4" stroke="#4f9a55" stroke-width="0.6" opacity="0.16360058062377592"/>
<path d="M1316.4 228.8L1387.9 272.1" stroke="#4f9a55" stroke-width="0.6" opacity="0.2179492298371224"/>
<path d="M1293.1 214.5L1332 240.8" stroke="#4f9a55" stroke-width="0.6" opacity="0.1553479170689824"/>
<path d="M1339.4 197.9L1242.1 237.4" stroke="#4f9a55" stroke-width="0.6" opacity="0.17929820662639004"/>
<path d="M1126.9 97.1L1203.5 144.9" stroke="#4f9a55" stroke-width="0.6" opacity="0.19172443494958286"/>
<path d="M1378.2 328.6L1412.7 394.8" stroke="#4f9a55" stroke-width="0.6" opacity="0.18444988524118583"/>
<path d="M1145.1 23.2L1214 137" stroke="#4f9a55" stroke-width="0.6" opacity="0.20797702975589016"/>
<path d="M1365.2 279.6L1492.2 343.1" stroke="#4f9a55" stroke-width="0.6" opacity="0.1578483888544"/>
<path d="M1173.5 233.9L1279.1 262" stroke="#4f9a55" stroke-width="0.6" opacity="0.2667766288014976"/>
<path d="M1138.8 28.8L1085 94.7" stroke="#4f9a55" stroke-width="0.6" opacity="0.2884271555967536"/>
<path d="M1094.3 233.3L1210.3 286.7" stroke="#4f9a55" stroke-width="0.6" opacity="0.17665171922975492"/>
<path d="M1234 147.7L1120.3 198.7" stroke="#4f9a55" stroke-width="0.6" opacity="0.21288457435784686"/>
<path d="M1176.3 130.3L1067 209.7" stroke="#4f9a55" stroke-width="0.6" opacity="0.29622855909549983"/>
<path d="M1245 329.3L1319.6 366.5" stroke="#4f9a55" stroke-width="0.6" opacity="0.2781565352551846"/>
<path d="M1261.2 33.1L1230.6 94.3" stroke="#4f9a55" stroke-width="0.6" opacity="0.2659034534659235"/>
<path d="M1158.2 97.8L1194.4 149.3" stroke="#4f9a55" stroke-width="0.6" opacity="0.24548811082878663"/>
<path d="M1055.1 121.7L959.9 165" stroke="#4f9a55" stroke-width="0.6" opacity="0.27485388432581487"/>
<path d="M1094.7 127.4L1064.4 185.1" stroke="#4f9a55" stroke-width="0.6" opacity="0.2415667234914361"/>
<path d="M1288.7 52.3L1215.5 90.8" stroke="#4f9a55" stroke-width="0.6" opacity="0.2223774316946427"/>
<path d="M1075.8 15.6L1160.6 134.4" stroke="#4f9a55" stroke-width="0.6" opacity="0.1857610789013974"/>
<path d="M1281.8 84.8L1227 107.5" stroke="#4f9a55" stroke-width="0.6" opacity="0.25805299912822793"/>
<path d="M1072.6 75.4L1148.6 194" stroke="#4f9a55" stroke-width="0.6" opacity="0.18059683190545264"/>
<path d="M1055.5 88.8L1013.9 106.5" stroke="#4f9a55" stroke-width="0.6" opacity="0.1922942825057939"/>
<path d="M1224.7 321.1L1297.1 438.6" stroke="#4f9a55" stroke-width="0.6" opacity="0.29707401320073556"/>
<path d="M1266.1 228.1L1193 349.4" stroke="#4f9a55" stroke-width="0.6" opacity="0.2212189345548441"/>
<path d="M1167.6 102.9L1267.9 148.1" stroke="#4f9a55" stroke-width="0.6" opacity="0.22233535841174856"/>
<path d="M1290.3 105.2L1347.9 187.1" stroke="#4f9a55" stroke-width="0.6" opacity="0.2605508242299388"/>
<path d="M1346.2 243.2L1268.5 360.5" stroke="#4f9a55" stroke-width="0.6" opacity="0.20277511449708804"/>
<path d="M1275.4 297.3L1314.6 315.8" stroke="#4f9a55" stroke-width="0.6" opacity="0.22498885047376993"/>
<path d="M1054.8 218.5L1154.7 256.9" stroke="#4f9a55" stroke-width="0.6" opacity="0.16203030432460652"/>
<path d="M1260.4 327.8L1336.7 359.8" stroke="#4f9a55" stroke-width="0.6" opacity="0.26025572273227177"/>
<path d="M1241.1 145.4L1289.1 229.2" stroke="#4f9a55" stroke-width="0.6" opacity="0.19653524860883348"/>
<path d="M1078.9 7.4L1132.7 100.5" stroke="#4f9a55" stroke-width="0.6" opacity="0.28806964101601085"/>
<path d="M1134.2 3.7L1215.5 73.7" stroke="#4f9a55" stroke-width="0.6" opacity="0.2277591930735191"/>
<path d="M1298 113L1235.4 135.8" stroke="#4f9a55" stroke-width="0.6" opacity="0.21071357540700478"/>
<path d="M1132.4 209.3L1058.1 244.6" stroke="#4f9a55" stroke-width="0.6" opacity="0.23746607816309118"/>
<path d="M1154.1 44.9L1025.5 96.4" stroke="#4f9a55" stroke-width="0.6" opacity="0.15608586599441368"/>
<path d="M1071.1 323.5L1031.8 406.5" stroke="#4f9a55" stroke-width="0.6" opacity="0.288859780372024"/>
<path d="M1323.4 126.2L1210.3 162.8" stroke="#4f9a55" stroke-width="0.6" opacity="0.2762853070892801"/>
<path d="M1255.6 105.7L1350.5 154.8" stroke="#4f9a55" stroke-width="0.6" opacity="0.251738207089116"/>
<path d="M1142.5 116.9L1214.4 161.3" stroke="#4f9a55" stroke-width="0.6" opacity="0.17848777326724657"/>
<path d="M1303.1 87.9L1221.1 211.4" stroke="#4f9a55" stroke-width="0.6" opacity="0.1672957257700869"/>
<path d="M1085.9 176.7L996.9 250" stroke="#4f9a55" stroke-width="0.6" opacity="0.17990121337455264"/>
<path d="M1206.3 59L1289.2 112.9" stroke="#4f9a55" stroke-width="0.6" opacity="0.15542625097084656"/>
<path d="M1124.5 256.9L1063.4 368.4" stroke="#4f9a55" stroke-width="0.6" opacity="0.2859355478256078"/>
<path d="M1110.6 522.3L1110.6 631.7" stroke="#2f7a50" stroke-width="0.6" opacity="0.1981873889496208"/>
<path d="M1218.3 350.3L1218.3 480.4" stroke="#2f7a50" stroke-width="0.6" opacity="0.23275238765032463"/>
<path d="M1252.2 492.4L1252.2 610.1" stroke="#2f7a50" stroke-width="0.6" opacity="0.31219612097765254"/>
<path d="M1221.3 364.7L1221.3 417.3" stroke="#2f7a50" stroke-width="0.6" opacity="0.2810709911678893"/>
<path d="M1325.6 359.3L1325.6 468.2" stroke="#2f7a50" stroke-width="0.6" opacity="0.2098615210795467"/>
<path d="M1349.6 549.1L1349.6 686.6" stroke="#2f7a50" stroke-width="0.6" opacity="0.2551739240940273"/>
<path d="M1317.5 179.4L1317.5 309.5" stroke="#2f7a50" stroke-width="0.6" opacity="0.2998096847697402"/>
<path d="M1187.5 46.4L1187.5 124.9" stroke="#2f7a50" stroke-width="0.6" opacity="0.25704226984827505"/>
<path d="M1310.9 273L1310.9 306.1" stroke="#2f7a50" stroke-width="0.6" opacity="0.2932796223570172"/>
<path d="M1103.8 447.9L1103.8 496.9" stroke="#2f7a50" stroke-width="0.6" opacity="0.22690060582847657"/>
<path d="M1316.6 78.7L1316.6 125" stroke="#2f7a50" stroke-width="0.6" opacity="0.25231348846911944"/>
<path d="M1297.7 470.4L1297.7 576.2" stroke="#2f7a50" stroke-width="0.6" opacity="0.3124046355723696"/>
<path d="M1229.8 531.5L1229.8 571" stroke="#2f7a50" stroke-width="0.6" opacity="0.21099798337756911"/>
<path d="M1239.8 162.5L1239.8 272.7" stroke="#2f7a50" stroke-width="0.6" opacity="0.2694419598803598"/>
<path d="M1238.7 472.4L1238.7 564" stroke="#2f7a50" stroke-width="0.6" opacity="0.22363765875981606"/>
<path d="M1197.1 473.3L1197.1 602.4" stroke="#2f7a50" stroke-width="0.6" opacity="0.20915354015397908"/>
<path d="M1335.1 542.3L1335.1 630" stroke="#2f7a50" stroke-width="0.6" opacity="0.2602184712117215"/>
<path d="M1144.1 300.1L1144.1 385.5" stroke="#2f7a50" stroke-width="0.6" opacity="0.26473188484299354"/>
<path d="M1093.2 542.9L1093.2 629.6" stroke="#2f7a50" stroke-width="0.6" opacity="0.23608175081133503"/>
<path d="M1320.5 315.2L1320.5 399.2" stroke="#2f7a50" stroke-width="0.6" opacity="0.27673814656844714"/>
<path d="M1104.4 301.7L1104.4 377.2" stroke="#2f7a50" stroke-width="0.6" opacity="0.3139611109499274"/>
<path d="M1356.5 150.8L1356.5 232.8" stroke="#2f7a50" stroke-width="0.6" opacity="0.1977754624750861"/>
<path d="M1212.5 456.8L1212.5 585.9" stroke="#2f7a50" stroke-width="0.6" opacity="0.24671458030862697"/>
<path d="M1178.3 107.2L1178.3 205.2" stroke="#2f7a50" stroke-width="0.6" opacity="0.30953789499723305"/>
<path d="M1123.1 436.4L1123.1 468.9" stroke="#2f7a50" stroke-width="0.6" opacity="0.20717492432723988"/>
<path d="M1151.8 384.7L1151.8 450.2" stroke="#2f7a50" stroke-width="0.6" opacity="0.22974859278071919"/>
<path d="M1267.2 58.7L1267.2 169.1" stroke="#2f7a50" stroke-width="0.6" opacity="0.19718966856053927"/>
<path d="M1235.1 140.3L1235.1 192.1" stroke="#2f7a50" stroke-width="0.6" opacity="0.2542492637263418"/>
<path d="M1213.4 210.4L1213.4 285.9" stroke="#2f7a50" stroke-width="0.6" opacity="0.2541086779997588"/>
<path d="M1132 114.4L1132 213.8" stroke="#2f7a50" stroke-width="0.6" opacity="0.2693854030264029"/>
<path d="M1240.7 476.7L1240.7 574" stroke="#2f7a50" stroke-width="0.6" opacity="0.29994698985744417"/>
<path d="M1153.4 414.8L1153.4 534" stroke="#2f7a50" stroke-width="0.6" opacity="0.3063748541873611"/>
<path d="M1177.9 176.4L1177.9 307.9" stroke="#2f7a50" stroke-width="0.6" opacity="0.21054020351889757"/>
<path d="M1378.5 497L1378.5 541.8" stroke="#2f7a50" stroke-width="0.6" opacity="0.21350864632841807"/>
<path d="M1298.6 145.3L1298.6 186" stroke="#2f7a50" stroke-width="0.6" opacity="0.29650359475438776"/>
<path d="M1209 442.4L1209 486.2" stroke="#2f7a50" stroke-width="0.6" opacity="0.23638903221427632"/>
<path d="M1286.5 9.9L1286.5 62" stroke="#2f7a50" stroke-width="0.6" opacity="0.27553363926755087"/>
<path d="M1352.9 542.3L1352.9 585" stroke="#2f7a50" stroke-width="0.6" opacity="0.25079532927909953"/>
<path d="M1307.9 281.6L1307.9 387" stroke="#2f7a50" stroke-width="0.6" opacity="0.20646102035342245"/>
<path d="M1105.7 59.5L1105.7 93.6" stroke="#2f7a50" stroke-width="0.6" opacity="0.25723401029311777"/>
<path d="M1230 308.9L1276.2 308.9" stroke="#2f7a50" stroke-width="0.6" opacity="0.20583508116075827"/>
<path d="M1299.3 122.3L1438.2 122.3" stroke="#2f7a50" stroke-width="0.6" opacity="0.30976492415525986"/>
<path d="M1100.8 57.1L1235.5 57.1" stroke="#2f7a50" stroke-width="0.6" opacity="0.2446899037872612"/>
<path d="M1168.3 458.8L1249.7 458.8" stroke="#2f7a50" stroke-width="0.6" opacity="0.2521401976767169"/>
<path d="M1238.2 258L1269.7 258" stroke="#2f7a50" stroke-width="0.6" opacity="0.27814421270581235"/>
<path d="M1131.2 506.6L1211.2 506.6" stroke="#2f7a50" stroke-width="0.6" opacity="0.28350679302086784"/>
<path d="M1134.8 243.2L1182.9 243.2" stroke="#2f7a50" stroke-width="0.6" opacity="0.25175851174390973"/>
<path d="M1312.8 9.3L1430.9 9.3" stroke="#2f7a50" stroke-width="0.6" opacity="0.27865401642462473"/>
<path d="M1245.5 516.4L1320 516.4" stroke="#2f7a50" stroke-width="0.6" opacity="0.26394472022900506"/>
<path d="M1335.6 302.6L1454.1 302.6" stroke="#2f7a50" stroke-width="0.6" opacity="0.21615699439594302"/>
<path d="M1274.8 546.8L1390.4 546.8" stroke="#2f7a50" stroke-width="0.6" opacity="0.2940498409474745"/>
<path d="M1313.6 243.4L1440.4 243.4" stroke="#2f7a50" stroke-width="0.6" opacity="0.2772718288882191"/>
<path d="M1280.1 460.4L1354.8 460.4" stroke="#2f7a50" stroke-width="0.6" opacity="0.28116880957688717"/>
<path d="M1172.1 42.3L1253.7 42.3" stroke="#2f7a50" stroke-width="0.6" opacity="0.18148324477916017"/>
<path d="M1247.9 213.4L1346.5 213.4" stroke="#2f7a50" stroke-width="0.6" opacity="0.2124950072036428"/>
<path d="M1254.9 566.8L1322 566.8" stroke="#2f7a50" stroke-width="0.6" opacity="0.2723665722970544"/>
<path d="M1220.9 341.7L1293.8 341.7" stroke="#2f7a50" stroke-width="0.6" opacity="0.3199841821913667"/>
<path d="M1263.8 385.4L1377.6 385.4" stroke="#2f7a50" stroke-width="0.6" opacity="0.3172121395207036"/>
<path d="M1241.9 13.7L1353.2 13.7" stroke="#2f7a50" stroke-width="0.6" opacity="0.21592868910812218"/>
<path d="M1097.9 240.9L1149.4 240.9" stroke="#2f7a50" stroke-width="0.6" opacity="0.23259473891190613"/>
<path d="M1149 59.1L1278.6 59.1" stroke="#2f7a50" stroke-width="0.6" opacity="0.25700807672491854"/>
<path d="M1331.6 304.7L1424.1 304.7" stroke="#2f7a50" stroke-width="0.6" opacity="0.3193147217776593"/>
<path d="M1291.4 382.8L1329.8 382.8" stroke="#2f7a50" stroke-width="0.6" opacity="0.2636551217256493"/>
<path d="M1096.5 455.5L1228.8 455.5" stroke="#2f7a50" stroke-width="0.6" opacity="0.20239042024334034"/>
<path d="M1128.1 283.1L1212.6 283.1" stroke="#2f7a50" stroke-width="0.6" opacity="0.2655640240275764"/>
<path d="M1326 35.1L1402.3 35.1" stroke="#2f7a50" stroke-width="0.6" opacity="0.25374615382998794"/>
<path d="M1178.2 358.7L1239.7 358.7" stroke="#2f7a50" stroke-width="0.6" opacity="0.27171561641816655"/>
<path d="M1157.3 336.4L1266.1 336.4" stroke="#2f7a50" stroke-width="0.6" opacity="0.22144566970885235"/>
<path d="M1147.5 8.4L1182.2 8.4" stroke="#2f7a50" stroke-width="0.6" opacity="0.20192223949158794"/>
<path d="M1184.4 452.8L1313.2 452.8" stroke="#2f7a50" stroke-width="0.6" opacity="0.2847708364999887"/>
<path d="M1337.1 30.1L1471 30.1" stroke="#2f7a50" stroke-width="0.6" opacity="0.190290599552265"/>
<path d="M1194.5 543.3L1277.1 543.3" stroke="#2f7a50" stroke-width="0.6" opacity="0.31624353025682184"/>
<path d="M1218.5 146.2L1351.6 146.2" stroke="#2f7a50" stroke-width="0.6" opacity="0.28118328725789643"/>
<path d="M1334.6 281L1454.4 281" stroke="#2f7a50" stroke-width="0.6" opacity="0.26450726076138653"/>
<path d="M1244.2 69.1L1324.3 69.1" stroke="#2f7a50" stroke-width="0.6" opacity="0.2085119716864681"/>
<path d="M1219.7 31.2L1263.3 31.2" stroke="#2f7a50" stroke-width="0.6" opacity="0.24200097590363737"/>
<path d="M1201.2 400.7L1260 400.7" stroke="#2f7a50" stroke-width="0.6" opacity="0.26151313137621346"/>
<path d="M1283.4 251.7L1371.8 251.7" stroke="#2f7a50" stroke-width="0.6" opacity="0.3196688426969668"/>
<path d="M1272.2 571.6L1328.5 571.6" stroke="#2f7a50" stroke-width="0.6" opacity="0.19594159744987474"/>
<path d="M1285 535.6L1383.7 535.6" stroke="#2f7a50" stroke-width="0.6" opacity="0.23028574525166845"/>
<circle cx="1204.9" cy="417.3" r="3.5" stroke="#4f9a55" stroke-width="0.7" opacity="0.3" fill="none"/>
<circle cx="1307.1" cy="130.2" r="3" stroke="#4f9a55" stroke-width="0.7" opacity="0.3" fill="none"/>
<circle cx="1320.1" cy="130.1" r="2.5" stroke="#4f9a55" stroke-width="0.7" opacity="0.3" fill="none"/>
<circle cx="1260" cy="398.7" r="2.5" stroke="#4f9a55" stroke-width="0.7" opacity="0.3" fill="none"/>
<circle cx="1350" cy="42.9" r="2.5" stroke="#4f9a55" stroke-width="0.7" opacity="0.3" fill="none"/>
<circle cx="1142.3" cy="170.5" r="2.5" stroke="#4f9a55" stroke-width="0.7" opacity="0.3" fill="none"/>
<circle cx="1289" cy="79.4" r="3.5" stroke="#4f9a55" stroke-width="0.7" opacity="0.3" fill="none"/>
<circle cx="1206.5" cy="458.4" r="3.5" stroke="#4f9a55" stroke-width="0.7" opacity="0.3" fill="none"/>
<circle cx="1178.4" cy="156.2" r="3" stroke="#4f9a55" stroke-width="0.7" opacity="0.3" fill="none"/>
<circle cx="1255.7" cy="225.4" r="3" stroke="#4f9a55" stroke-width="0.7" opacity="0.3" fill="none"/>
<circle cx="1222.1" cy="452" r="2.5" stroke="#4f9a55" stroke-width="0.7" opacity="0.3" fill="none"/>
<circle cx="1331.7" cy="279.4" r="3.5" stroke="#4f9a55" stroke-width="0.7" opacity="0.3" fill="none"/>
<circle cx="1340.3" cy="466" r="3" stroke="#4f9a55" stroke-width="0.7" opacity="0.3" fill="none"/>
<circle cx="1241.4" cy="169.7" r="2.5" stroke="#4f9a55" stroke-width="0.7" opacity="0.3" fill="none"/>
<circle cx="1228.2" cy="399.1" r="3.5" stroke="#4f9a55" stroke-width="0.7" opacity="0.3" fill="none"/>
<circle cx="1217.8" cy="338.2" r="3.5" stroke="#4f9a55" stroke-width="0.7" opacity="0.3" fill="none"/>
<circle cx="1337.5" cy="126.6" r="3.5" stroke="#4f9a55" stroke-width="0.7" opacity="0.3" fill="none"/>
<circle cx="1228.3" cy="76.3" r="3" stroke="#4f9a55" stroke-width="0.7" opacity="0.3" fill="none"/>
<circle cx="1158.8" cy="68.2" r="3.5" stroke="#4f9a55" stroke-width="0.7" opacity="0.3" fill="none"/>
<circle cx="1275.7" cy="492.9" r="3" stroke="#4f9a55" stroke-width="0.7" opacity="0.3" fill="none"/>
<circle cx="1211.4" cy="469.8" r="2.5" stroke="#4f9a55" stroke-width="0.7" opacity="0.3" fill="none"/>
<circle cx="1214.1" cy="548.2" r="3.5" stroke="#4f9a55" stroke-width="0.7" opacity="0.3" fill="none"/>
<circle cx="1159.5" cy="196.2" r="3.5" stroke="#4f9a55" stroke-width="0.7" opacity="0.3" fill="none"/>
<circle cx="1322.6" cy="210.2" r="2.5" stroke="#4f9a55" stroke-width="0.7" opacity="0.3" fill="none"/>
<rect x="862" y="480" width="70" height="131" stroke="#0e6a5a" stroke-width="0.9" opacity="0.25" fill="none"/>
<path d="M815 480L862 480" stroke="#0e6a5a" stroke-width="0.7" opacity="0.2"/>
<path d="M815 611L1000 611" stroke="#0e6a5a" stroke-width="0.7" opacity="0.2"/>
<path d="M1035 127l-5.800 5.800h11.600zM1021.5 140l5.500 -5l-0.500 5zM1048.5 140l-5.500 -5l0.500 5z" fill="#96a24c" stroke="none" opacity="0.5"/>
<circle cx="1035" cy="142" r="9" stroke="#3f8a5a" stroke-width="0.8" opacity="0.35" fill="none"/>
<path d="M1035 421.5l-5.800 5.800h11.600zM1021.5 434.5l5.500 -5l-0.500 5zM1048.5 434.5l-5.500 -5l0.500 5z" fill="#b8a452" stroke="none" opacity="0.6"/>
<circle cx="1035" cy="436.5" r="9" stroke="#3f8a5a" stroke-width="0.8" opacity="0.35" fill="none"/>
<path d="M1035 552l-5.800 5.800h11.600zM1021.5 565l5.500 -5l-0.500 5zM1048.5 565l-5.500 -5l0.500 5z" fill="#b8a452" stroke="none" opacity="0.6"/>
<circle cx="1035" cy="567" r="9" stroke="#3f8a5a" stroke-width="0.8" opacity="0.35" fill="none"/>
<path d="M1359.5 789.8l5.800 -5.800v11.600zM1372.5 776.3l-5 5.500l5 -0.500zM1372.5 803.3l-5 -5.500l5 0.500z" fill="#a89a4c" stroke="none" opacity="0.5"/>
<circle cx="1374.5" cy="789.8" r="9" stroke="#3f8a5a" stroke-width="0.8" opacity="0.35" fill="none"/>
<rect x="1096.5" y="350.6" width="58" height="25.4" stroke="#2f7a50" stroke-width="1" opacity="0.5" fill="none"/>
<path d="M1096.5 376L1121.5 351" stroke="#4f9a55" stroke-width="0.6" opacity="0.4"/>
<path d="M1100.5 376L1125.5 351" stroke="#4f9a55" stroke-width="0.6" opacity="0.4"/>
<path d="M1104.5 376L1129.5 351" stroke="#4f9a55" stroke-width="0.6" opacity="0.4"/>
<path d="M1108.5 376L1133.5 351" stroke="#4f9a55" stroke-width="0.6" opacity="0.4"/>
<path d="M1112.5 376L1137.5 351" stroke="#4f9a55" stroke-width="0.6" opacity="0.4"/>
<path d="M1116.5 376L1141.5 351" stroke="#4f9a55" stroke-width="0.6" opacity="0.4"/>
<path d="M1120.5 376L1145.5 351" stroke="#4f9a55" stroke-width="0.6" opacity="0.4"/>
<path d="M1124.5 376L1149.5 351" stroke="#4f9a55" stroke-width="0.6" opacity="0.4"/>
<path d="M1128.5 376L1153.5 351" stroke="#4f9a55" stroke-width="0.6" opacity="0.4"/>
<path d="M1132.5 376L1154.5 354" stroke="#4f9a55" stroke-width="0.6" opacity="0.4"/>
<path d="M1136.5 376L1154.5 358" stroke="#4f9a55" stroke-width="0.6" opacity="0.4"/>
<path d="M1140.5 376L1154.5 362" stroke="#4f9a55" stroke-width="0.6" opacity="0.4"/>
<path d="M1144.5 376L1154.5 366" stroke="#4f9a55" stroke-width="0.6" opacity="0.4"/>
<path d="M1148.5 376L1154.5 370" stroke="#4f9a55" stroke-width="0.6" opacity="0.4"/>
<path d="M1152.5 376L1154.5 374" stroke="#4f9a55" stroke-width="0.6" opacity="0.4"/>
<path d="M1096.5 348L1096.5 930" stroke="#7d8a3c" stroke-width="0.9" opacity="0.32"/>
<path d="M1102 348L1102 930" stroke="#7d8a3c" stroke-width="0.9" opacity="0.32"/>
<path d="M1154.5 350L1154.5 452" stroke="#2f7a50" stroke-width="0.9" opacity="0.4"/>
<path d="M1303 451L1365 451" stroke="#4f9a55" stroke-width="1.3" opacity="0.55"/>
<path d="M1317 325L1317 438" stroke="#7d8a3c" stroke-width="1" opacity="0.45"/>
<path d="M1321 325L1321 438" stroke="#7d8a3c" stroke-width="1" opacity="0.45"/>
<path d="M1213 325L1321 325" stroke="#7d8a3c" stroke-width="1.2" opacity="0.45"/>
<path d="M1213 328L1321 328" stroke="#7d8a3c" stroke-width="0.8" opacity="0.35"/>
<path d="M1213 270L1213 325" stroke="#7d8a3c" stroke-width="1" opacity="0.4"/>
<path d="M1331.5 270L1331.5 600" stroke="#2f7a50" stroke-width="0.8" opacity="0.35"/>
<path d="M1340 270L1340 600" stroke="#2f7a50" stroke-width="0.8" opacity="0.35"/>
<path d="M1363 270L1363 600" stroke="#2f7a50" stroke-width="0.8" opacity="0.35"/>
<path d="M1331 383L1379 383" stroke="#4f9a55" stroke-width="1" opacity="0.45"/>
<path d="M1331 388L1379 388" stroke="#2f7a50" stroke-width="0.7" opacity="0.3"/>
<rect x="1145" y="283" width="68" height="40" stroke="#7d8a3c" stroke-width="1.2" opacity="0.4" fill="none"/>
<rect x="1237" y="415" width="80" height="28" stroke="#2f7a50" stroke-width="0.7" opacity="0.3" fill="none"/>
<path d="M1237 415L1317 443" stroke="#2f7a50" stroke-width="0.5" opacity="0.25"/>
<path d="M1237 443L1317 415" stroke="#2f7a50" stroke-width="0.5" opacity="0.25"/>
<path d="M960.3 377.4L1000.8 397.4L1041.3 377.4" stroke="#1f7a68" stroke-width="1.1" opacity="0.42" fill="none"/>
<path d="M960.3 386L1000.8 406L1041.3 386" stroke="#1f7a68" stroke-width="1.1" opacity="0.42" fill="none"/>
<path d="M960.3 397.5L1000.8 417.5L1041.3 397.5" stroke="#1f7a68" stroke-width="1.1" opacity="0.42" fill="none"/>
<path d="M960.3 377.4L1000.8 357.4L1041.3 377.4" stroke="#1f7a68" stroke-width="1.1" opacity="0.42" fill="none"/>
<path d="M966 389L1000.8 372L1035 389" stroke="#1f7a68" stroke-width="0.8" opacity="0.3" fill="none"/>
<path d="M974 425.7L1064 425.7" stroke="#7d8a3c" stroke-width="0.9" opacity="0.3"/>
<path d="M964 460L1110 460" stroke="#1f7a68" stroke-width="1.4" opacity="0.35"/>
<path d="M988 0L988 735" stroke="#2f7a50" stroke-width="0.6" opacity="0.18"/>
<rect x="1031" y="455" width="48" height="33" stroke="#2f7a50" stroke-width="0.7" opacity="0.3" fill="none"/>
<path d="M1031 455L1064 488" stroke="#2f7a50" stroke-width="0.5" opacity="0.3"/>
<path d="M1035 455L1068 488" stroke="#2f7a50" stroke-width="0.5" opacity="0.3"/>
<path d="M1039 455L1072 488" stroke="#2f7a50" stroke-width="0.5" opacity="0.3"/>
<path d="M1043 455L1076 488" stroke="#2f7a50" stroke-width="0.5" opacity="0.3"/>
<path d="M1047 455L1079 487" stroke="#2f7a50" stroke-width="0.5" opacity="0.3"/>
<path d="M1051 455L1079 483" stroke="#2f7a50" stroke-width="0.5" opacity="0.3"/>
<path d="M1055 455L1079 479" stroke="#2f7a50" stroke-width="0.5" opacity="0.3"/>
<path d="M1059 455L1079 475" stroke="#2f7a50" stroke-width="0.5" opacity="0.3"/>
<path d="M1063 455L1079 471" stroke="#2f7a50" stroke-width="0.5" opacity="0.3"/>
<path d="M1067 455L1079 467" stroke="#2f7a50" stroke-width="0.5" opacity="0.3"/>
<path d="M1071 455L1079 463" stroke="#2f7a50" stroke-width="0.5" opacity="0.3"/>
<path d="M1075 455L1079 459" stroke="#2f7a50" stroke-width="0.5" opacity="0.3"/>
<path d="M1035 451L1083 451" stroke="#2f7a50" stroke-width="0.8" opacity="0.35"/>
<circle cx="1035" cy="451" r="2.5" stroke="#4f9a55" stroke-width="0.8" opacity="0.4" fill="none"/>
<rect x="1087" y="457" width="6" height="7" stroke="#4f9a55" stroke-width="0.8" opacity="0.45" fill="none"/>
<rect x="1102" y="457" width="6" height="7" stroke="#4f9a55" stroke-width="0.8" opacity="0.45" fill="none"/>
<rect x="1122" y="457" width="6" height="7" stroke="#4f9a55" stroke-width="0.8" opacity="0.45" fill="none"/>
<rect x="1147" y="457" width="6" height="7" stroke="#4f9a55" stroke-width="0.8" opacity="0.45" fill="none"/>
<rect x="1229" y="457" width="6" height="7" stroke="#4f9a55" stroke-width="0.8" opacity="0.45" fill="none"/>
<rect x="1242" y="457" width="6" height="7" stroke="#4f9a55" stroke-width="0.8" opacity="0.45" fill="none"/>
<rect x="1259" y="457" width="6" height="7" stroke="#4f9a55" stroke-width="0.8" opacity="0.45" fill="none"/>
<rect x="1272" y="457" width="6" height="7" stroke="#4f9a55" stroke-width="0.8" opacity="0.45" fill="none"/>
<rect x="1292" y="457" width="6" height="7" stroke="#4f9a55" stroke-width="0.8" opacity="0.45" fill="none"/>
<rect x="1307" y="457" width="6" height="7" stroke="#4f9a55" stroke-width="0.8" opacity="0.45" fill="none"/>
<rect x="1114" y="443" width="14" height="8" stroke="#4f9a55" stroke-width="0.8" opacity="0.45" fill="none"/>
<rect x="1082.7" y="451.6" width="221" height="136.7" stroke="#58a85c" stroke-width="1.5" opacity="0.7" fill="none"/>
<rect x="1085.5" y="454.5" width="215.5" height="131" stroke="#4f9a55" stroke-width="0.8" opacity="0.4" fill="none"/>
<path d="M1155.6 452L1155.6 588" stroke="#58a85c" stroke-width="1.2" opacity="0.6"/>
<path d="M1228.5 452L1228.5 588" stroke="#58a85c" stroke-width="1.2" opacity="0.6"/>
<path d="M1082 494L1155 494" stroke="#4f9a55" stroke-width="1" opacity="0.5"/>
<path d="M1082 564L1155 564" stroke="#4f9a55" stroke-width="0.8" opacity="0.4"/>
<path d="M1242 521L1303 521" stroke="#4f9a55" stroke-width="1" opacity="0.5"/>
<path d="M1242 489L1303 489" stroke="#4f9a55" stroke-width="0.8" opacity="0.4"/>
<path d="M1258 455L1258 521" stroke="#4f9a55" stroke-width="0.9" opacity="0.45"/>
<path d="M1275 455L1275 521" stroke="#4f9a55" stroke-width="0.7" opacity="0.35"/>
<path d="M1082 525L1363 525" stroke="#7d8a3c" stroke-width="1.2" opacity="0.4"/>
<path d="M1082 527.5L1363 527.5" stroke="#7d8a3c" stroke-width="1.2" opacity="0.4"/>
<path d="M1206 528L1206 735" stroke="#7d8a3c" stroke-width="1.1" opacity="0.34"/>
<path d="M1209 528L1209 735" stroke="#7d8a3c" stroke-width="1.1" opacity="0.34"/>
<path d="M1095 528L1095 735" stroke="#7d8a3c" stroke-width="1.1" opacity="0.32"/>
<path d="M1097.5 528L1097.5 735" stroke="#7d8a3c" stroke-width="1.1" opacity="0.32"/>
<path d="M1316 528L1316 735" stroke="#7d8a3c" stroke-width="1.1" opacity="0.34"/>
<path d="M1318.5 528L1318.5 735" stroke="#7d8a3c" stroke-width="1.1" opacity="0.34"/>
<path d="M1363 430L1363 632" stroke="#4f9a55" stroke-width="1" opacity="0.5"/>
<path d="M985 731L1379 731" stroke="#7d8a3c" stroke-width="1.2" opacity="0.36"/>
<path d="M985 734L1379 734" stroke="#7d8a3c" stroke-width="1.2" opacity="0.36"/>
<path d="M1060 623.6L1379 623.6" stroke="#2f7a50" stroke-width="1" opacity="0.45"/>
<path d="M1060 631.6L1379 631.6" stroke="#5f8a48" stroke-width="1.3" opacity="0.5"/>
<rect x="1017" y="563" width="74" height="137" stroke="#2f7a50" stroke-width="0.9" opacity="0.32" fill="none"/>
<path d="M1017 699L1237 699" stroke="#2f7a50" stroke-width="0.8" opacity="0.3"/>
<path d="M1321 631L1379 631" stroke="#4f9a55" stroke-width="1" opacity="0.4"/>
<rect x="1365" y="462" width="9" height="9" stroke="#6fbf6a" stroke-width="1.2" opacity="0.7" fill="none"/>
<rect x="1365" y="485" width="9" height="10" stroke="#6fbf6a" stroke-width="1.2" opacity="0.7" fill="none"/>
<rect x="1365" y="503" width="9" height="12" stroke="#6fbf6a" stroke-width="1.2" opacity="0.7" fill="none"/>
<ellipse cx="1101" cy="458" rx="3.500" ry="2.500" stroke="#58a85c" stroke-width="0.9" opacity="0.6"/>
<ellipse cx="1120" cy="458" rx="3.500" ry="2.500" stroke="#58a85c" stroke-width="0.9" opacity="0.6"/>
<ellipse cx="1150" cy="458" rx="3.500" ry="2.500" stroke="#58a85c" stroke-width="0.9" opacity="0.6"/>
<ellipse cx="1246" cy="458" rx="3.500" ry="2.500" stroke="#58a85c" stroke-width="0.9" opacity="0.6"/>
<ellipse cx="1262" cy="458" rx="3.500" ry="2.500" stroke="#58a85c" stroke-width="0.9" opacity="0.6"/>
<ellipse cx="1276" cy="458" rx="3.500" ry="2.500" stroke="#58a85c" stroke-width="0.9" opacity="0.6"/>
<ellipse cx="1293" cy="458" rx="3.500" ry="2.500" stroke="#58a85c" stroke-width="0.9" opacity="0.6"/>
<ellipse cx="1250" cy="515" rx="3.500" ry="2.500" stroke="#58a85c" stroke-width="0.9" opacity="0.6"/>
<ellipse cx="1262" cy="515" rx="3.500" ry="2.500" stroke="#58a85c" stroke-width="0.9" opacity="0.6"/>
<ellipse cx="1293" cy="515" rx="3.500" ry="2.500" stroke="#58a85c" stroke-width="0.9" opacity="0.6"/>
<rect x="1122" y="549" width="16" height="28" stroke="#2f7a50" stroke-width="0.7" opacity="0.32" fill="none"/>
<rect x="1114" y="555" width="6" height="5" stroke="#2f7a50" stroke-width="0.6" opacity="0.3" fill="none"/>
<rect x="1114" y="569" width="6" height="5" stroke="#2f7a50" stroke-width="0.6" opacity="0.3" fill="none"/>
<rect x="1142" y="555" width="6" height="5" stroke="#2f7a50" stroke-width="0.6" opacity="0.3" fill="none"/>
<rect x="1142" y="569" width="6" height="5" stroke="#2f7a50" stroke-width="0.6" opacity="0.3" fill="none"/>
<rect x="1127" y="541" width="6" height="5" stroke="#2f7a50" stroke-width="0.6" opacity="0.3" fill="none"/>
<rect x="1127" y="579" width="6" height="5" stroke="#2f7a50" stroke-width="0.6" opacity="0.3" fill="none"/>
<rect x="1122" y="616" width="16" height="28" stroke="#2f7a50" stroke-width="0.7" opacity="0.32" fill="none"/>
<rect x="1114" y="622" width="6" height="5" stroke="#2f7a50" stroke-width="0.6" opacity="0.3" fill="none"/>
<rect x="1114" y="636" width="6" height="5" stroke="#2f7a50" stroke-width="0.6" opacity="0.3" fill="none"/>
<rect x="1142" y="622" width="6" height="5" stroke="#2f7a50" stroke-width="0.6" opacity="0.3" fill="none"/>
<rect x="1142" y="636" width="6" height="5" stroke="#2f7a50" stroke-width="0.6" opacity="0.3" fill="none"/>
<rect x="1127" y="608" width="6" height="5" stroke="#2f7a50" stroke-width="0.6" opacity="0.3" fill="none"/>
<rect x="1127" y="646" width="6" height="5" stroke="#2f7a50" stroke-width="0.6" opacity="0.3" fill="none"/>
<rect x="1122" y="676" width="16" height="28" stroke="#2f7a50" stroke-width="0.7" opacity="0.32" fill="none"/>
<rect x="1114" y="682" width="6" height="5" stroke="#2f7a50" stroke-width="0.6" opacity="0.3" fill="none"/>
<rect x="1114" y="696" width="6" height="5" stroke="#2f7a50" stroke-width="0.6" opacity="0.3" fill="none"/>
<rect x="1142" y="682" width="6" height="5" stroke="#2f7a50" stroke-width="0.6" opacity="0.3" fill="none"/>
<rect x="1142" y="696" width="6" height="5" stroke="#2f7a50" stroke-width="0.6" opacity="0.3" fill="none"/>
<rect x="1127" y="668" width="6" height="5" stroke="#2f7a50" stroke-width="0.6" opacity="0.3" fill="none"/>
<rect x="1127" y="706" width="6" height="5" stroke="#2f7a50" stroke-width="0.6" opacity="0.3" fill="none"/>
<rect x="1168" y="676" width="16" height="28" stroke="#2f7a50" stroke-width="0.7" opacity="0.32" fill="none"/>
<rect x="1160" y="682" width="6" height="5" stroke="#2f7a50" stroke-width="0.6" opacity="0.3" fill="none"/>
<rect x="1160" y="696" width="6" height="5" stroke="#2f7a50" stroke-width="0.6" opacity="0.3" fill="none"/>
<rect x="1188" y="682" width="6" height="5" stroke="#2f7a50" stroke-width="0.6" opacity="0.3" fill="none"/>
<rect x="1188" y="696" width="6" height="5" stroke="#2f7a50" stroke-width="0.6" opacity="0.3" fill="none"/>
<rect x="1173" y="668" width="6" height="5" stroke="#2f7a50" stroke-width="0.6" opacity="0.3" fill="none"/>
<rect x="1173" y="706" width="6" height="5" stroke="#2f7a50" stroke-width="0.6" opacity="0.3" fill="none"/>
<rect x="1240" y="567" width="48" height="120" rx="22" stroke="#2f7a50" stroke-width="0.8" opacity="0.35"/>
<rect x="1230" y="575" width="6" height="6" stroke="#2f7a50" stroke-width="0.6" opacity="0.3" fill="none"/>
<rect x="1292" y="575" width="6" height="6" stroke="#2f7a50" stroke-width="0.6" opacity="0.3" fill="none"/>
<rect x="1230" y="595" width="6" height="6" stroke="#2f7a50" stroke-width="0.6" opacity="0.3" fill="none"/>
<rect x="1292" y="595" width="6" height="6" stroke="#2f7a50" stroke-width="0.6" opacity="0.3" fill="none"/>
<rect x="1230" y="615" width="6" height="6" stroke="#2f7a50" stroke-width="0.6" opacity="0.3" fill="none"/>
<rect x="1292" y="615" width="6" height="6" stroke="#2f7a50" stroke-width="0.6" opacity="0.3" fill="none"/>
<rect x="1230" y="640" width="6" height="6" stroke="#2f7a50" stroke-width="0.6" opacity="0.3" fill="none"/>
<rect x="1292" y="640" width="6" height="6" stroke="#2f7a50" stroke-width="0.6" opacity="0.3" fill="none"/>
<rect x="1230" y="660" width="6" height="6" stroke="#2f7a50" stroke-width="0.6" opacity="0.3" fill="none"/>
<rect x="1292" y="660" width="6" height="6" stroke="#2f7a50" stroke-width="0.6" opacity="0.3" fill="none"/>
<rect x="1321" y="545" width="58" height="45" stroke="#4f9a55" stroke-width="0.9" opacity="0.4" fill="none"/>
<rect x="1335" y="600" width="44" height="30" stroke="#2f7a50" stroke-width="0.8" opacity="0.3" fill="none"/>
<rect x="1362" y="655" width="17" height="50" stroke="#2f7a50" stroke-width="0.7" opacity="0.25" fill="none"/>
<path d="M964 836L1379 836" stroke="#7d8a3c" stroke-width="0.7" opacity="0.28" stroke-dasharray="10 4"/>
<path d="M964 859.6L1379 859.6" stroke="#7d8a3c" stroke-width="0.7" opacity="0.28" stroke-dasharray="10 4"/>
<path d="M964 877L1379 877" stroke="#7d8a3c" stroke-width="0.7" opacity="0.28" stroke-dasharray="10 4"/>
<path d="M988 917L1379 917" stroke="#7d8a3c" stroke-width="0.7" opacity="0.3"/>
<path d="M988 735L988 930" stroke="#7d8a3c" stroke-width="0.7" opacity="0.22" stroke-dasharray="10 4"/>
<path d="M1098 735L1098 930" stroke="#7d8a3c" stroke-width="0.7" opacity="0.22" stroke-dasharray="10 4"/>
<path d="M1208 735L1208 930" stroke="#7d8a3c" stroke-width="0.7" opacity="0.22" stroke-dasharray="10 4"/>
<path d="M1318.5 735L1318.5 930" stroke="#7d8a3c" stroke-width="0.7" opacity="0.22" stroke-dasharray="10 4"/>
<circle cx="946" cy="528" r="9" stroke="#7d8a3c" stroke-width="0.8" opacity="0.2" fill="none"/>
<circle cx="946" cy="630.5" r="9" stroke="#7d8a3c" stroke-width="0.8" opacity="0.2" fill="none"/>
<circle cx="946" cy="733.8" r="9" stroke="#7d8a3c" stroke-width="0.8" opacity="0.2" fill="none"/>
<circle cx="946" cy="836" r="9" stroke="#7d8a3c" stroke-width="0.8" opacity="0.2" fill="none"/>
<circle cx="946" cy="860.7" r="9" stroke="#7d8a3c" stroke-width="0.8" opacity="0.2" fill="none"/>
<circle cx="946" cy="877.7" r="9" stroke="#7d8a3c" stroke-width="0.8" opacity="0.2" fill="none"/>
<path d="M955 528L1090 528" stroke="#7d8a3c" stroke-width="0.6" opacity="0.18" stroke-dasharray="8 4"/>
<path d="M955 630.5L1090 630.5" stroke="#7d8a3c" stroke-width="0.6" opacity="0.18" stroke-dasharray="8 4"/>
<path d="M1593.8 814.1A399 399 0 0 1 1003.2 739" stroke="#7d8a3c" stroke-width="0.9" opacity="0.42"/>
<path d="M1585.2 804.3A386 386 0 0 1 1124 838.2" stroke="#7d8a3c" stroke-width="0.7" opacity="0.32"/>
<path d="M1577.4 795.3A374 374 0 0 1 1146.7 837.9" stroke="#7d8a3c" stroke-width="0.7" opacity="0.32"/>
<path d="M1568.8 785.5A361 361 0 0 1 1174.9 838" stroke="#7d8a3c" stroke-width="0.7" opacity="0.32"/>
<rect x="990" y="728" width="37" height="6" stroke="#7d8a3c" stroke-width="1" opacity="0.4" fill="none"/>
<rect x="1097" y="812" width="4" height="14" stroke="#7d8a3c" stroke-width="1" opacity="0.4" fill="none"/>
<rect x="1206" y="850" width="6" height="8" stroke="#7d8a3c" stroke-width="0.8" opacity="0.35" fill="none"/>
<rect x="1316" y="871" width="6" height="8" stroke="#7d8a3c" stroke-width="0.8" opacity="0.35" fill="none"/>
<path d="M1098 812L1168 812" stroke="#7d8a3c" stroke-width="0.6" opacity="0.25"/>
<path d="M1111 725h8l-4 6zM1111 743h8l-4 -6z" stroke="#7d8a3c" stroke-width="0.6" opacity="0.35"/>
<path d="M1189 725h8l-4 6zM1189 743h8l-4 -6z" stroke="#7d8a3c" stroke-width="0.6" opacity="0.35"/>
<path d="M1228 725h8l-4 6zM1228 743h8l-4 -6z" stroke="#7d8a3c" stroke-width="0.6" opacity="0.35"/>
<path d="M1299 725h8l-4 6zM1299 743h8l-4 -6z" stroke="#7d8a3c" stroke-width="0.6" opacity="0.35"/>
<path d="M1329 725h8l-4 6zM1329 743h8l-4 -6z" stroke="#7d8a3c" stroke-width="0.6" opacity="0.35"/>
<circle cx="1153" cy="742" r="4" stroke="#7d8a3c" stroke-width="0.6" opacity="0.3" fill="none"/>
<circle cx="1263" cy="742" r="4" stroke="#7d8a3c" stroke-width="0.6" opacity="0.3" fill="none"/>
<circle cx="1372" cy="742" r="4" stroke="#7d8a3c" stroke-width="0.6" opacity="0.3" fill="none"/>
</g>
</svg>
<div id="topline"></div>
<div id="toolbox"><i style="top:10px"></i><i style="top:14px"></i><i style="top:18px"></i></div>

<!-- desktop icons -->
<svg class="dicon" style="left:35px" viewBox="0 0 64 64">
<defs><linearGradient id="ff" x1="0" y1="0" x2="0" y2="1"><stop offset="0" stop-color="#6fc2ef"/><stop offset="1" stop-color="#3daee9"/></linearGradient></defs>
<path d="M4 6 H29 L33 10 H60 V40 H4 Z" fill="#147eb8"/>
<path d="M3 20 H22 L26 16 H61 V58 H3 Z" fill="url(#ff)"/>
<g fill="none" stroke="#1f82c4" stroke-width="1.100"><path d="M22.500 29.500 H41.500 M27.500 29.500 V27.500 H36.500 V29.500 M24.500 29.500 V46.500 H39.500 V29.500 M29.500 34 V42 M34.500 34 V42"/></g>
</svg>
<div class="dlabel" style="left:16px;width:101px;letter-spacing:0.35px">Papierkorb</div>
<svg class="dicon" style="left:173px" viewBox="0 0 64 64">
<path d="M4 6 H29 L33 10 H60 V40 H4 Z" fill="#147eb8"/>
<path d="M3 20 H22 L26 16 H61 V58 H3 Z" fill="url(#ff)"/>
<g fill="none" stroke="#1f82c4" stroke-width="1.100"><path d="M22 38.500 L32 28 L42 38.500 M24.500 37 V46.500 H39.500 V37 M37.500 33 V29.500"/></g>
<rect x="30" y="40" width="4" height="7" fill="#1f82c4"/>
</svg>
<div class="dlabel" style="left:125px;width:160px;letter-spacing:0.2px">Persönlicher Ordner</div>

<!-- window -->
<div id="win">
<div id="tbar"></div><div id="tline"></div>
<div style="position:absolute;left:539px;top:29px;width:1px;height:484px;background:#fcfcfc"></div><div style="position:absolute;left:540px;top:29px;width:1px;height:484px;background:rgba(0,14,14,0.55)"></div><div style="position:absolute;left:0;top:29px;width:539px;height:1px;background:#f8f4f2"></div>
<div id="ttitle">KDE-Infozentrum</div>
<svg class="ga" style="position:absolute;left:440px;top:4px;width:96px;height:20px" viewBox="440 429 96 20">
<text x="450" y="445.600" font-size="17" fill="#e4e7e8" text-anchor="middle" font-family="Liberation Sans, sans-serif">?</text>
<path d="M468.500 436.500 L474 442 L479.500 436.500" fill="none" stroke="#fcfcfc" stroke-width="1.200"/>
<path d="M492.500 441.500 L498 436 L503.500 441.500" fill="none" stroke="#fcfcfc" stroke-width="1.200"/>
<circle cx="522" cy="439" r="9" fill="#fcfcfc"/>
<path d="M517.500 434.500 L526.500 443.500 M526.500 434.500 L517.500 443.500" stroke="#475057" stroke-width="1.200"/>
</svg>
<div id="h1"><span style="left:0.200px;letter-spacing:0.89px">Informationen</span><span style="left:135.700px;letter-spacing:0.5px">über</span><span style="left:182px;letter-spacing:-0.2px">dieses</span><span style="left:243.200px;letter-spacing:0.21px">System</span></div>
<svg style="position:absolute;left:10px;top:120px;width:220px;height:220px" viewBox="0 0 966 966">
<defs><clipPath id="oc"><circle cx="483" cy="478" r="438"/></clipPath></defs>
<circle cx="483" cy="478" r="438" fill="#73ba25"/>
<g clip-path="url(#oc)"><path d="M753 211 L1200 658 L664 1194 L217 747 Z" fill="#6cae23"/></g>
<circle cx="485" cy="479" r="379" fill="#eff0f1"/>
<path clip-path="url(#oc)" d="M40 200 L203 228 L283 250 L283 185 C400 200 560 240 680 290 C720 310 735 340 750 375 C770 425 785 470 795 518 C740 560 680 580 620 580 C520 575 420 520 333 462 L365 540 C450 585 540 620 610 626 C680 625 740 600 785 578 C785 620 770 645 740 660 C640 705 520 728 430 725 C350 722 300 712 250 715 C225 718 212 724 203 730 L40 760 Z" fill="#73ba25"/>
<circle cx="587" cy="415" r="117" fill="#eff0f1"/>
<circle cx="587" cy="415" r="82" fill="#73ba25"/>
<ellipse cx="603" cy="399" rx="37" ry="25" fill="#eff0f1"/>
</svg>
<div id="osname"><span style="left:-1px;letter-spacing:-1.5px">openSUSE</span><span style="left:120.900px;letter-spacing:-0.85px">Leap</span><span style="left:181.800px;letter-spacing:-1.03px">15.1</span></div>
<div id="link">https://www.opensuse.org</div>
<div class="row" style="top:365px"><span class="v" style="font-weight:bold;letter-spacing:-0.1px">Software</span></div>
<div class="row" style="top:389px"><span class="l" style="letter-spacing:0px">KDE-Plasma-Version:</span><span class="v">5.12.8</span></div>
<div class="row" style="top:413px"><span class="l" style="letter-spacing:0.15px">KDE-Frameworks-Version:</span><span class="v">5.55.0</span></div>
<div class="row" style="top:437px"><span class="l" style="letter-spacing:0.2px">Qt-Version:</span><span class="v">5.9.7</span></div>
<div class="row" style="top:462px"><span class="l" style="letter-spacing:0.25px">Kernel-Version:</span><span class="v" style="letter-spacing:0.24px">4.12.14-lp151.27-default</span></div>
<div class="row" style="top:487px"><span class="l" style="letter-spacing:0.22px">Art des Betriebssystems:</span><span class="v" style="letter-spacing:0.3px">64-bit</span></div>
</div>

<!-- panel -->
<div id="pshadow"></div>
<div id="panel">
<div style="position:absolute;left:540px;top:0;width:839px;height:1px;background:rgba(255,255,255,0.45)"></div>
<!-- launcher -->
<svg style="position:absolute;left:0;top:2px;width:26px;height:26px" viewBox="0 0 26 26">
<defs><clipPath id="lc"><circle cx="13" cy="13" r="10.500"/></clipPath></defs>
<circle cx="13" cy="13" r="10.500" fill="#f7f7f7" stroke="#232629" stroke-width="1.300"/>
<g clip-path="url(#lc)"><path d="M0 5.500 L6.500 7.200 L7.800 6 C12 6.300 17 7.600 19.600 9.300 C21.200 11 21.800 13.200 22 15 C20 17 17.500 17.300 15.500 16.800 C13 16 10.800 14.800 9.300 13.500 L10.300 15.600 C13 17.600 16.500 18.800 19.500 18.300 C20.500 18 21.300 17.600 21.800 17.200 C21.600 18.600 21 19.400 20 19.800 C16 21.400 11 21.600 7 20.800 L2 22 L0 22 Z" fill="#232629"/></g>
<circle cx="16" cy="11.800" r="3.100" fill="#f7f7f7"/><circle cx="16" cy="11.800" r="2.100" fill="#232629"/><circle cx="16.500" cy="11.400" r="0.900" fill="#f7f7f7"/>
</svg>
<!-- pager -->
<div style="position:absolute;left:31px;top:1px;width:18px;height:14px;background:#89cbee"></div>
<div style="position:absolute;left:31px;top:15px;width:18px;height:13px;background:#dfe0e2"></div>
<div style="position:absolute;left:31px;top:7px;width:5px;height:5px;background:#5b9fc9;border:1px solid #2a7db0"></div>
<div id="task"></div>
<!-- task icon -->
<svg style="position:absolute;left:59px;top:5px;width:20px;height:20px" viewBox="0 0 20 20">
<defs><linearGradient id="ib" x1="0" y1="0" x2="0" y2="1"><stop offset="0" stop-color="#21b3f7"/><stop offset="1" stop-color="#1a7fee"/></linearGradient></defs>
<rect x="0" y="0" width="20" height="20" rx="1" fill="#6aa84f"/>
<rect x="3" y="17" width="14" height="2" fill="#3d6b2c"/><rect x="17" y="4" width="1.500" height="6" fill="#2f4f2a"/>
<rect x="3" y="2.700" width="14" height="14.300" fill="url(#ib)"/>
<circle cx="10" cy="9.800" r="5.400" fill="none" stroke="#bfe3fb" stroke-width="0.900"/>
<rect x="9.300" y="8.800" width="1.500" height="4.200" fill="#e8f5fe"/><circle cx="10" cy="7" r="0.950" fill="#e8f5fe"/>
</svg>
<div id="tasklabel">KDE-Infozentrum</div>
<!-- tray -->
<svg class="ga" style="position:absolute;left:1060px;top:0;width:319px;height:28px" viewBox="1060 938 319 28">
<g fill="none" stroke="#232629">
<circle cx="1074" cy="953" r="7.500" stroke-width="1"/>
</g>
<text x="1074" y="957.500" font-size="11.500" text-anchor="middle" fill="#232629" font-family="Liberation Sans, sans-serif">1</text>
<!-- klipper -->
<g fill="#232629">
<path d="M1093 947h14v14h-14zM1094.300 948.300v11.400h11.400v-11.400z" fill-rule="evenodd"/>
<rect x="1096" y="945" width="8" height="4"/>
<rect x="1096" y="951" width="8" height="1.200"/><rect x="1096" y="954" width="6" height="1.200"/><rect x="1096" y="957" width="3" height="1.200"/>
</g>
<!-- usb -->
<g fill="#232629">
<path d="M1122 945h8v7h-8zM1123.200 946.200v4.800h5.600v-4.800z" fill-rule="evenodd"/>
<rect x="1124.300" y="947.300" width="1.400" height="2"/><rect x="1126.500" y="947.300" width="1.400" height="2"/>
<path d="M1121 952h10v9h-10zM1122.200 953.200v6.600h7.600v-6.600z" fill-rule="evenodd"/>
<rect x="1124" y="957" width="4" height="1.200"/>
</g>
<text x="1144" y="957.600" font-size="12.500" font-weight="bold" fill="#3f4aa3" font-family="Liberation Sans, sans-serif" textLength="15.500" lengthAdjust="spacingAndGlyphs">DE</text>
<!-- clipboard tan -->
<g>
<rect x="1169" y="946" width="16" height="16.500" rx="1.500" fill="#d9a55c"/>
<rect x="1169" y="946" width="16" height="16.500" rx="1.500" fill="none" stroke="#b98a48" stroke-width="0.800"/>
<rect x="1173" y="943" width="8" height="4.500" rx="0.800" fill="#e6e6e6" stroke="#a9a9a9" stroke-width="0.600"/>
<path d="M1177 951.500h10.500v11.500h-7.500l-3 -0z" fill="#f2f2f2" stroke="#bdbdbd" stroke-width="0.600"/>
<rect x="1179" y="954" width="6.500" height="1" fill="#d0d0d0"/><rect x="1179" y="956" width="6.500" height="1" fill="#d0d0d0"/><rect x="1179" y="958" width="6.500" height="1" fill="#d0d0d0"/>
</g>
<!-- updates -->
<g fill="none" stroke="#232629" stroke-width="1">
<path d="M1197.200 949.500A7.500 7.500 0 0 1 1209.500 948.500M1210.800 955A7.500 7.500 0 0 1 1197.500 957.500" />
<path d="M1195.800 951.500A7.500 7.500 0 0 0 1196 955.500" stroke-dasharray="1.200 1"/>
</g>
<path d="M1203.500 947l4.500 5h-2.500v5h-4v-5h-2.500z" fill="#232629"/>
<circle cx="1209" cy="958.300" r="3" fill="#da4453"/>
<!-- network -->
<g fill="#232629">
<path d="M1226 945h12v11h-12v-1.200h10.800v-8.600h-10.800z"/>
<rect x="1228" y="957.500" width="8" height="1.300"/><rect x="1230" y="956" width="4" height="2"/><rect x="1227" y="959.300" width="10" height="1.400"/>
<path d="M1222 945h5v5h-5zM1223.100 946.100v2.800h2.800v-2.800z" fill-rule="evenodd"/>
<path d="M1224 950v7.500q0 2 2 2h2v-1.100h-2q-0.900 0-0.900 -0.900v-7.500z"/>
</g>
<!-- volume -->
<g fill="#232629">
<rect x="1248" y="949.500" width="2.200" height="6.500"/>
<path d="M1251 949.500L1256.500 945v16L1251 956z"/>
</g>
<path d="M1258.500 948.500A6 6 0 0 1 1258.500 957.500" fill="none" stroke="#9aa0a3" stroke-width="1"/>
<path d="M1260.500 946A9 9 0 0 1 1260.500 960" fill="none" stroke="#c5c9ca" stroke-width="1"/>
<!-- expander -->
<path d="M1276 956l6 -6.200l6 6.200z" fill="#232629"/>
<!-- hamburger -->
<g fill="#7f8c8d"><rect x="1358" y="948" width="12" height="1.600"/><rect x="1358" y="952.200" width="12" height="1.600"/><rect x="1358" y="956.400" width="12" height="1.600"/></g>
</svg>
<div id="clock">19:57</div>
</div>
</div>
</body>
</html>
